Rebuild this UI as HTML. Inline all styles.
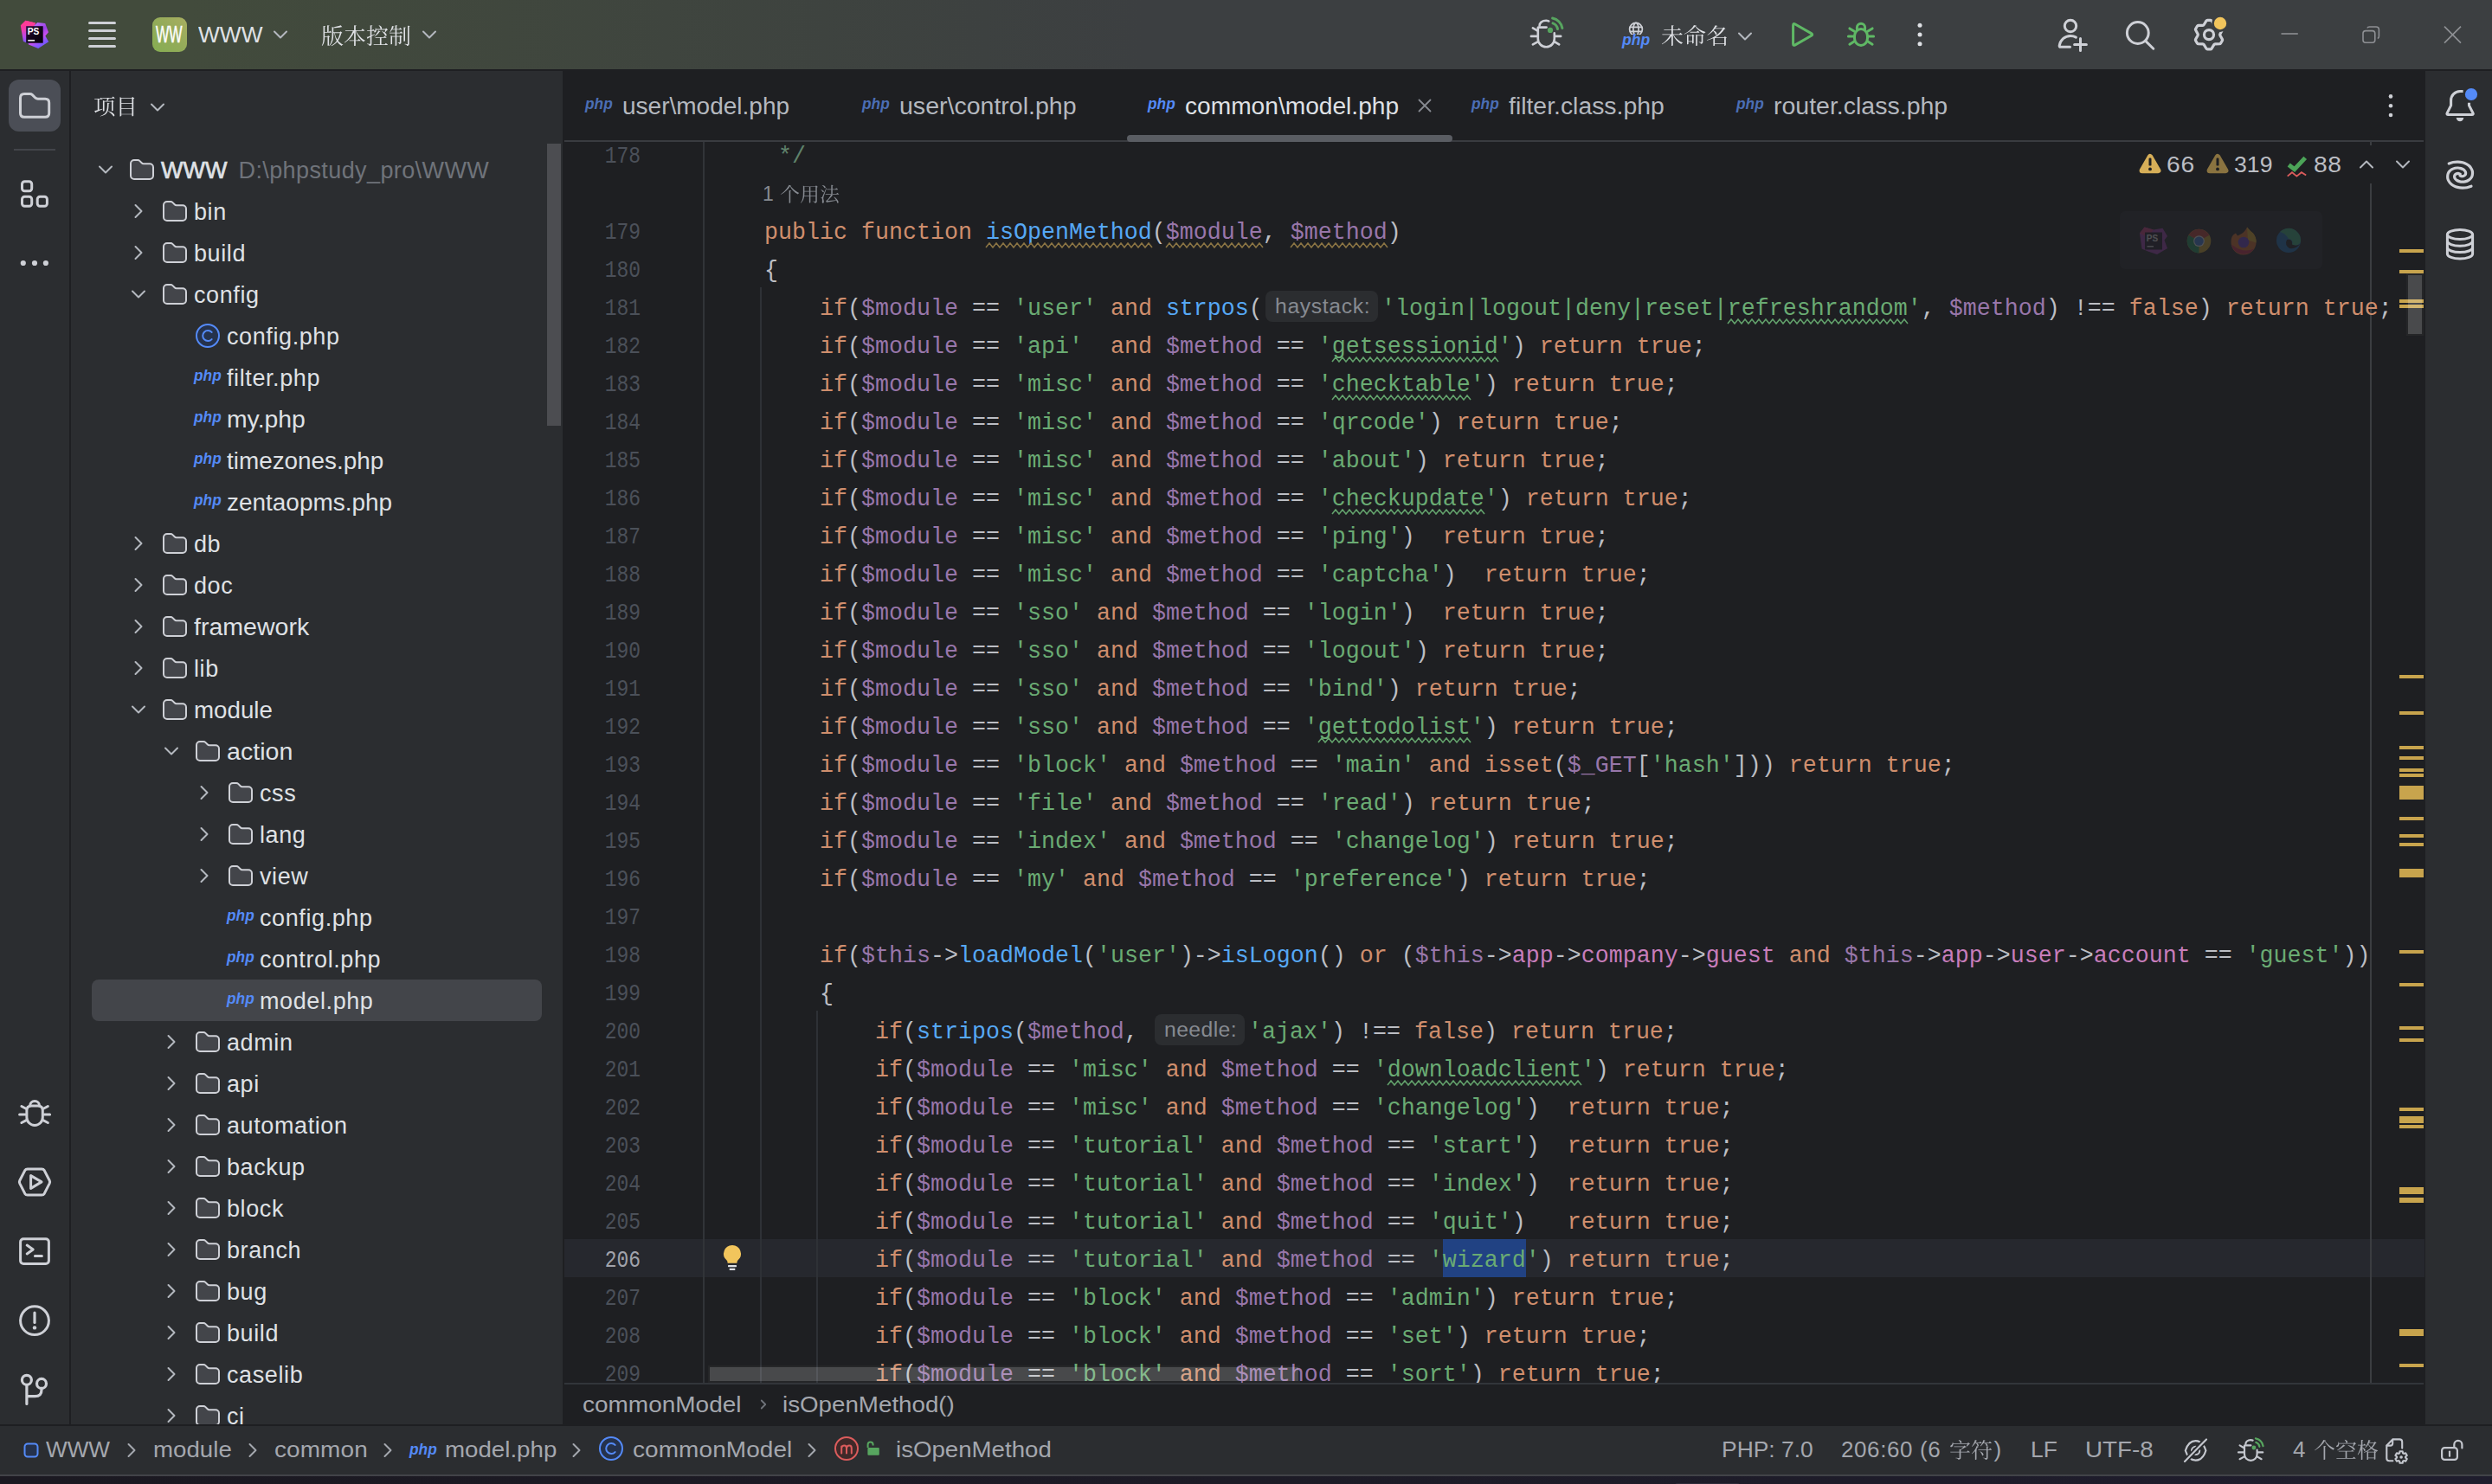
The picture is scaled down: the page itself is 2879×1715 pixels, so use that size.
<!DOCTYPE html><html lang='en'><head><meta charset='utf-8'><title>PhpStorm</title><style>
*{box-sizing:border-box;margin:0;padding:0}
html,body{width:2879px;height:1715px;overflow:hidden;background:#1E1F22}
body{position:relative;font-family:"Liberation Sans",sans-serif;color:#DFE1E5;font-size:27px;-webkit-font-smoothing:antialiased}
.abs{position:absolute}
.t{position:absolute;white-space:pre;line-height:1}
svg{position:absolute;overflow:visible}
#title{left:0;top:0;width:2879px;height:80px;background:linear-gradient(90deg,#424B3C 0px,#424B3C 220px,#3C3F41 1320px,#3C3F41 100%)}
#lstrip{left:0;top:82px;width:80px;height:1564px;background:#2B2D30}
#proj{left:82px;top:82px;width:568px;height:1564px;background:#2B2D30}
#rstrip{left:2802px;top:82px;width:77px;height:1564px;background:#2B2D30}
#status{left:0;top:1648px;width:2879px;height:56px;background:#2B2D30}
#task{left:0;top:1706px;width:2879px;height:9px;background:linear-gradient(90deg,#1B1921 0%,#1D1B26 50%,#1F1D2D 100%)}
.code{position:absolute;left:819px;white-space:pre;font-family:"Liberation Mono",monospace;font-size:26.667px;line-height:44px;height:44px;color:#BCBEC4;letter-spacing:-0.002px;transform:scaleY(1.07);transform-origin:0 29.1px}
.num{position:absolute;left:640px;width:100px;text-align:right;white-space:pre;font-family:"Liberation Mono",monospace;font-size:28px;line-height:44px;height:44px;color:#4B5059;transform:scaleX(0.82);transform-origin:100% 0}
.k{color:#CF8E6D}.v{color:#9876AA}.s{color:#6AAB73}.f{color:#56A8F5}.p{color:#C77DBB}.c{color:#5F826B}
.tree{position:absolute;white-space:pre;font-size:27px;line-height:48px;height:48px;color:#DFE1E5;letter-spacing:0.4px}
</style></head><body>
<div id='title' class='abs'></div>
<div class='abs' style='left:0;top:80px;width:2879px;height:2px;background:#1E1F22'></div>
<div id='lstrip' class='abs'></div>
<div id='proj' class='abs'></div>
<div id='rstrip' class='abs'></div>
<div id='status' class='abs'></div>
<div id='task' class='abs'></div>
<div class='abs' style='left:1935px;top:1714px;width:75px;height:6px;border-radius:5px;background:#2E2C3A'></div>
<div class='abs' id='ed' style='left:0;top:164px;width:2801px;height:1434px;overflow:hidden'><div class='abs' style='left:0;top:-164px;width:2879px;height:1715px'>
<div class='abs' style='left:652px;top:1432px;width:2149px;height:44px;background:#26282E'></div>
<div class='abs' style='left:812px;top:164px;width:2px;height:1434px;background:#313438'></div>
<div class='abs' style='left:2738px;top:164px;width:2px;height:1434px;background:#3B3D41'></div>
<div class='abs' style='left:878.25px;top:332px;width:2px;height:1266px;background:#2E3136'></div>
<div class='abs' style='left:942.75px;top:1168px;width:2px;height:430px;background:#2E3136'></div>
<div class='num' style='top:158.5px'>178</div>
<div class='code' style='top:159px'><span class='c'>     */</span></div>
<div class='num' style='top:246.5px'>179</div>
<div class='code' style='top:247px'>    <span class='k'>public</span> <span class='k'>function</span> <span class='f'><span class='ww'>isOpenMethod</span></span>(<span class='v'><span class='ww'>$module</span></span>, <span class='v'><span class='ww'>$method</span></span>)</div>
<div class='num' style='top:290.5px'>180</div>
<div class='code' style='top:291px'>    {</div>
<div class='num' style='top:334.5px'>181</div>
<div class='code' style='top:335px'>        <span class='k'>if</span>(<span class='v'>$module</span> == <span class='s'>'user'</span> <span class='k'>and</span> <span class='f'>strpos</span>(</div>
<div class='abs' style='left:1462px;top:336px;width:130px;height:36px;border-radius:8px;background:#2B2D30'></div>
<div class='t' style='left:1472.5px;top:342.73px;font-size:23px;color:#868A91;letter-spacing:0.601px;transform:scaleX(1.0750);transform-origin:0 0'>haystack:</div>
<div class='code' style='top:335px;left:1596px'><span class='s'>'login|logout|deny|reset|<span class='wt'>refreshrandom</span>'</span>, <span class='v'>$method</span>) !== <span class='k'>false</span>) <span class='k'>return</span> <span class='k'>true</span>;</div>
<div class='num' style='top:378.5px'>182</div>
<div class='code' style='top:379px'>        <span class='k'>if</span>(<span class='v'>$module</span> == <span class='s'>'api'</span>  <span class='k'>and</span> <span class='v'>$method</span> == <span class='s'>'<span class='wt'>getsessionid</span>'</span>) <span class='k'>return</span> <span class='k'>true</span>;</div>
<div class='num' style='top:422.5px'>183</div>
<div class='code' style='top:423px'>        <span class='k'>if</span>(<span class='v'>$module</span> == <span class='s'>'misc'</span> <span class='k'>and</span> <span class='v'>$method</span> == <span class='s'>'<span class='wt'>checktable</span>'</span>) <span class='k'>return</span> <span class='k'>true</span>;</div>
<div class='num' style='top:466.5px'>184</div>
<div class='code' style='top:467px'>        <span class='k'>if</span>(<span class='v'>$module</span> == <span class='s'>'misc'</span> <span class='k'>and</span> <span class='v'>$method</span> == <span class='s'>'qrcode'</span>) <span class='k'>return</span> <span class='k'>true</span>;</div>
<div class='num' style='top:510.5px'>185</div>
<div class='code' style='top:511px'>        <span class='k'>if</span>(<span class='v'>$module</span> == <span class='s'>'misc'</span> <span class='k'>and</span> <span class='v'>$method</span> == <span class='s'>'about'</span>) <span class='k'>return</span> <span class='k'>true</span>;</div>
<div class='num' style='top:554.5px'>186</div>
<div class='code' style='top:555px'>        <span class='k'>if</span>(<span class='v'>$module</span> == <span class='s'>'misc'</span> <span class='k'>and</span> <span class='v'>$method</span> == <span class='s'>'<span class='wt'>checkupdate</span>'</span>) <span class='k'>return</span> <span class='k'>true</span>;</div>
<div class='num' style='top:598.5px'>187</div>
<div class='code' style='top:599px'>        <span class='k'>if</span>(<span class='v'>$module</span> == <span class='s'>'misc'</span> <span class='k'>and</span> <span class='v'>$method</span> == <span class='s'>'ping'</span>)  <span class='k'>return</span> <span class='k'>true</span>;</div>
<div class='num' style='top:642.5px'>188</div>
<div class='code' style='top:643px'>        <span class='k'>if</span>(<span class='v'>$module</span> == <span class='s'>'misc'</span> <span class='k'>and</span> <span class='v'>$method</span> == <span class='s'>'captcha'</span>)  <span class='k'>return</span> <span class='k'>true</span>;</div>
<div class='num' style='top:686.5px'>189</div>
<div class='code' style='top:687px'>        <span class='k'>if</span>(<span class='v'>$module</span> == <span class='s'>'sso'</span> <span class='k'>and</span> <span class='v'>$method</span> == <span class='s'>'login'</span>)  <span class='k'>return</span> <span class='k'>true</span>;</div>
<div class='num' style='top:730.5px'>190</div>
<div class='code' style='top:731px'>        <span class='k'>if</span>(<span class='v'>$module</span> == <span class='s'>'sso'</span> <span class='k'>and</span> <span class='v'>$method</span> == <span class='s'>'logout'</span>) <span class='k'>return</span> <span class='k'>true</span>;</div>
<div class='num' style='top:774.5px'>191</div>
<div class='code' style='top:775px'>        <span class='k'>if</span>(<span class='v'>$module</span> == <span class='s'>'sso'</span> <span class='k'>and</span> <span class='v'>$method</span> == <span class='s'>'bind'</span>) <span class='k'>return</span> <span class='k'>true</span>;</div>
<div class='num' style='top:818.5px'>192</div>
<div class='code' style='top:819px'>        <span class='k'>if</span>(<span class='v'>$module</span> == <span class='s'>'sso'</span> <span class='k'>and</span> <span class='v'>$method</span> == <span class='s'>'<span class='wt'>gettodolist</span>'</span>) <span class='k'>return</span> <span class='k'>true</span>;</div>
<div class='num' style='top:862.5px'>193</div>
<div class='code' style='top:863px'>        <span class='k'>if</span>(<span class='v'>$module</span> == <span class='s'>'block'</span> <span class='k'>and</span> <span class='v'>$method</span> == <span class='s'>'main'</span> <span class='k'>and</span> <span class='k'>isset</span>(<span class='v'>$_GET</span>[<span class='s'>'hash'</span>])) <span class='k'>return</span> <span class='k'>true</span>;</div>
<div class='num' style='top:906.5px'>194</div>
<div class='code' style='top:907px'>        <span class='k'>if</span>(<span class='v'>$module</span> == <span class='s'>'file'</span> <span class='k'>and</span> <span class='v'>$method</span> == <span class='s'>'read'</span>) <span class='k'>return</span> <span class='k'>true</span>;</div>
<div class='num' style='top:950.5px'>195</div>
<div class='code' style='top:951px'>        <span class='k'>if</span>(<span class='v'>$module</span> == <span class='s'>'index'</span> <span class='k'>and</span> <span class='v'>$method</span> == <span class='s'>'changelog'</span>) <span class='k'>return</span> <span class='k'>true</span>;</div>
<div class='num' style='top:994.5px'>196</div>
<div class='code' style='top:995px'>        <span class='k'>if</span>(<span class='v'>$module</span> == <span class='s'>'my'</span> <span class='k'>and</span> <span class='v'>$method</span> == <span class='s'>'preference'</span>) <span class='k'>return</span> <span class='k'>true</span>;</div>
<div class='num' style='top:1038.5px'>197</div>
<div class='code' style='top:1039px'></div>
<div class='num' style='top:1082.5px'>198</div>
<div class='code' style='top:1083px'>        <span class='k'>if</span>(<span class='v'>$this</span>-&gt;<span class='f'>loadModel</span>(<span class='s'>'user'</span>)-&gt;<span class='f'>isLogon</span>() <span class='k'>or</span> (<span class='v'>$this</span>-&gt;<span class='p'>app</span>-&gt;<span class='p'>company</span>-&gt;<span class='p'>guest</span> <span class='k'>and</span> <span class='v'>$this</span>-&gt;<span class='p'>app</span>-&gt;<span class='p'>user</span>-&gt;<span class='p'>account</span> == <span class='s'>'guest'</span>))</div>
<div class='num' style='top:1126.5px'>199</div>
<div class='code' style='top:1127px'>        {</div>
<div class='num' style='top:1170.5px'>200</div>
<div class='code' style='top:1171px'>            <span class='k'>if</span>(<span class='f'>stripos</span>(<span class='v'>$method</span>, </div>
<div class='abs' style='left:1334px;top:1172px;width:104px;height:36px;border-radius:8px;background:#2B2D30'></div>
<div class='t' style='left:1344.5px;top:1178.73px;font-size:23px;color:#868A91;letter-spacing:0.385px;transform:scaleX(1.0750);transform-origin:0 0'>needle:</div>
<div class='code' style='top:1171px;left:1442px'><span class='s'>'ajax'</span>) !== <span class='k'>false</span>) <span class='k'>return</span> <span class='k'>true</span>;</div>
<div class='num' style='top:1214.5px'>201</div>
<div class='code' style='top:1215px'>            <span class='k'>if</span>(<span class='v'>$module</span> == <span class='s'>'misc'</span> <span class='k'>and</span> <span class='v'>$method</span> == <span class='s'>'<span class='wt'>downloadclient</span>'</span>) <span class='k'>return</span> <span class='k'>true</span>;</div>
<div class='num' style='top:1258.5px'>202</div>
<div class='code' style='top:1259px'>            <span class='k'>if</span>(<span class='v'>$module</span> == <span class='s'>'misc'</span> <span class='k'>and</span> <span class='v'>$method</span> == <span class='s'>'changelog'</span>)  <span class='k'>return</span> <span class='k'>true</span>;</div>
<div class='num' style='top:1302.5px'>203</div>
<div class='code' style='top:1303px'>            <span class='k'>if</span>(<span class='v'>$module</span> == <span class='s'>'tutorial'</span> <span class='k'>and</span> <span class='v'>$method</span> == <span class='s'>'start'</span>)  <span class='k'>return</span> <span class='k'>true</span>;</div>
<div class='num' style='top:1346.5px'>204</div>
<div class='code' style='top:1347px'>            <span class='k'>if</span>(<span class='v'>$module</span> == <span class='s'>'tutorial'</span> <span class='k'>and</span> <span class='v'>$method</span> == <span class='s'>'index'</span>)  <span class='k'>return</span> <span class='k'>true</span>;</div>
<div class='num' style='top:1390.5px'>205</div>
<div class='code' style='top:1391px'>            <span class='k'>if</span>(<span class='v'>$module</span> == <span class='s'>'tutorial'</span> <span class='k'>and</span> <span class='v'>$method</span> == <span class='s'>'quit'</span>)   <span class='k'>return</span> <span class='k'>true</span>;</div>
<div class='num' style='top:1434.5px;color:#A1A3AB'>206</div>
<div class='abs' style='left:1667px;top:1432px;width:96px;height:44px;background:#214283'></div>
<div class='code' style='top:1435px'>            <span class='k'>if</span>(<span class='v'>$module</span> == <span class='s'>'tutorial'</span> <span class='k'>and</span> <span class='v'>$method</span> == <span class='s'>'wizard'</span>) <span class='k'>return</span> <span class='k'>true</span>;</div>
<div class='num' style='top:1478.5px'>207</div>
<div class='code' style='top:1479px'>            <span class='k'>if</span>(<span class='v'>$module</span> == <span class='s'>'block'</span> <span class='k'>and</span> <span class='v'>$method</span> == <span class='s'>'admin'</span>) <span class='k'>return</span> <span class='k'>true</span>;</div>
<div class='num' style='top:1522.5px'>208</div>
<div class='code' style='top:1523px'>            <span class='k'>if</span>(<span class='v'>$module</span> == <span class='s'>'block'</span> <span class='k'>and</span> <span class='v'>$method</span> == <span class='s'>'set'</span>) <span class='k'>return</span> <span class='k'>true</span>;</div>
<div class='num' style='top:1566.5px'>209</div>
<div class='code' style='top:1567px'>            <span class='k'>if</span>(<span class='v'>$module</span> == <span class='s'>'block'</span> <span class='k'>and</span> <span class='v'>$method</span> == <span class='s'>'sort'</span>) <span class='k'>return</span> <span class='k'>true</span>;</div>
<div class='abs' style='left:2772px;top:288px;width:28px;height:4px;background:#C8A44D'></div>
<div class='abs' style='left:2772px;top:312px;width:28px;height:4px;background:#C8A44D'></div>
<div class='abs' style='left:2772px;top:346px;width:28px;height:4px;background:#C8A44D'></div>
<div class='abs' style='left:2772px;top:352px;width:28px;height:4px;background:#C8A44D'></div>
<div class='abs' style='left:2772px;top:780px;width:28px;height:4px;background:#C8A44D'></div>
<div class='abs' style='left:2772px;top:822px;width:28px;height:4px;background:#C8A44D'></div>
<div class='abs' style='left:2772px;top:862px;width:28px;height:4px;background:#C8A44D'></div>
<div class='abs' style='left:2772px;top:874px;width:28px;height:4px;background:#C8A44D'></div>
<div class='abs' style='left:2772px;top:888px;width:28px;height:4px;background:#C8A44D'></div>
<div class='abs' style='left:2772px;top:894px;width:28px;height:4px;background:#C8A44D'></div>
<div class='abs' style='left:2772px;top:908px;width:28px;height:16px;background:#C8A44D'></div>
<div class='abs' style='left:2772px;top:944px;width:28px;height:4px;background:#C8A44D'></div>
<div class='abs' style='left:2772px;top:964px;width:28px;height:4px;background:#C8A44D'></div>
<div class='abs' style='left:2772px;top:974px;width:28px;height:4px;background:#C8A44D'></div>
<div class='abs' style='left:2772px;top:1004px;width:28px;height:10px;background:#C8A44D'></div>
<div class='abs' style='left:2772px;top:1098px;width:28px;height:4px;background:#C8A44D'></div>
<div class='abs' style='left:2772px;top:1136px;width:28px;height:4px;background:#C8A44D'></div>
<div class='abs' style='left:2772px;top:1186px;width:28px;height:4px;background:#C8A44D'></div>
<div class='abs' style='left:2772px;top:1200px;width:28px;height:4px;background:#C8A44D'></div>
<div class='abs' style='left:2772px;top:1280px;width:28px;height:4px;background:#C8A44D'></div>
<div class='abs' style='left:2772px;top:1290px;width:28px;height:8px;background:#C8A44D'></div>
<div class='abs' style='left:2772px;top:1300px;width:28px;height:4px;background:#C8A44D'></div>
<div class='abs' style='left:2772px;top:1372px;width:28px;height:8px;background:#C8A44D'></div>
<div class='abs' style='left:2772px;top:1384px;width:28px;height:6px;background:#C8A44D'></div>
<div class='abs' style='left:2772px;top:1536px;width:28px;height:8px;background:#C8A44D'></div>
<div class='abs' style='left:2772px;top:1576px;width:28px;height:4px;background:#C8A44D'></div>
<div class='abs' style='left:2780px;top:316px;width:20px;height:72px;background:rgba(255,255,255,0.03)'></div>
<div class='abs' style='left:2782px;top:318px;width:16px;height:68px;background:rgba(255,255,255,0.17)'></div>
<div class='abs' style='left:818px;top:1578px;width:684px;height:20px;background:rgba(255,255,255,0.03)'></div>
<div class='abs' style='left:820px;top:1580px;width:680px;height:16px;background:rgba(255,255,255,0.165)'></div>
<div class='t' style='left:881px;top:213.13px;font-size:23px;color:#868A91'>1</div>
<svg style='left:901px;top:209.80px' width='71' height='32' viewBox='0 -23 71 32'><path d='M11.68 -17.87C13.5 -14.12 16.77 -10.79 20.79 -8.46C21 -9.06 21.44 -9.61 22.13 -9.8L22.17 -10.12C17.92 -11.96 14.31 -14.93 12.1 -18.15C12.7 -18.19 12.95 -18.33 13.02 -18.61L10.4 -19.25C8.9 -15.62 4.88 -11.06 0.78 -8.35L0.97 -8C5.59 -10.35 9.64 -14.42 11.68 -17.87ZM13.04 -12.63 10.63 -12.88V1.84H10.92C11.52 1.84 12.19 1.52 12.19 1.31V-12.01C12.79 -12.07 12.97 -12.3 13.04 -12.63ZM28.38 -11.57H33.86V-6.74H28.2C28.36 -8.07 28.38 -9.38 28.38 -10.63ZM28.38 -12.24V-16.95H33.86V-12.24ZM26.86 -17.62V-10.6C26.86 -6.21 26.54 -1.89 23.87 1.54L24.22 1.77C26.68 -0.39 27.71 -3.2 28.11 -6.05H33.86V1.59H34.09C34.84 1.59 35.35 1.22 35.35 1.1V-6.05H41.28V-0.67C41.28 -0.3 41.15 -0.14 40.69 -0.14C40.2 -0.14 37.74 -0.34 37.74 -0.34V0.02C38.82 0.18 39.42 0.37 39.79 0.6C40.11 0.85 40.25 1.26 40.3 1.72C42.53 1.49 42.78 0.71 42.78 -0.48V-16.58C43.29 -16.7 43.7 -16.91 43.86 -17.11L41.84 -18.65L41.03 -17.62H28.66L26.86 -18.4ZM41.28 -11.57V-6.74H35.35V-11.57ZM41.28 -12.24H35.35V-16.95H41.28ZM48.32 -4.69C48.07 -4.69 47.31 -4.69 47.31 -4.69V-4.19C47.79 -4.14 48.14 -4.07 48.44 -3.86C48.97 -3.52 49.1 -1.7 48.78 0.64C48.83 1.38 49.1 1.79 49.52 1.79C50.32 1.79 50.78 1.17 50.83 0.18C50.92 -1.72 50.23 -2.71 50.23 -3.77C50.21 -4.35 50.37 -5.08 50.6 -5.84C50.95 -7.01 52.99 -12.77 54.05 -15.85L53.64 -15.96C49.31 -6.03 49.31 -6.03 48.9 -5.17C48.69 -4.69 48.6 -4.69 48.32 -4.69ZM47.2 -13.87 46.99 -13.66C47.95 -13.06 49.15 -11.89 49.5 -10.92C51.17 -9.98 52.05 -13.32 47.2 -13.87ZM48.94 -18.98 48.74 -18.75C49.77 -18.08 51.08 -16.81 51.5 -15.71C53.2 -14.79 54.12 -18.22 48.94 -18.98ZM65.14 -15.82 64.03 -14.44H60.79V-18.35C61.36 -18.45 61.57 -18.65 61.64 -18.98L59.29 -19.23V-14.44H54.14L54.33 -13.78H59.29V-8.97H52.62L52.81 -8.28H59.16C58.21 -6.26 55.68 -2.67 53.8 -1.13C53.64 -0.99 53.18 -0.9 53.18 -0.9L54 1.22C54.19 1.15 54.35 1.01 54.51 0.76C58.83 0.09 62.58 -0.64 65.18 -1.2C65.69 -0.28 66.1 0.64 66.29 1.45C68.1 2.88 69.21 -1.31 62.65 -5.52L62.35 -5.34C63.16 -4.32 64.12 -3.01 64.91 -1.68C60.93 -1.29 57.09 -0.97 54.74 -0.83C56.88 -2.55 59.27 -5.08 60.58 -6.88C61.04 -6.79 61.34 -6.97 61.46 -7.2L59.32 -8.28H67.76C68.08 -8.28 68.31 -8.39 68.36 -8.65C67.6 -9.38 66.31 -10.35 66.31 -10.35L65.23 -8.97H60.79V-13.78H66.54C66.84 -13.78 67.07 -13.89 67.14 -14.14C66.38 -14.86 65.14 -15.82 65.14 -15.82Z' fill='#868A91'/></svg>
<svg style='left:1139px;top:276px' width='192' height='12' viewBox='0 0 192 12' fill='none'><path d='M0.0 9.9 L4.0 5.1 L8.0 9.9 L12.0 5.1 L16.0 9.9 L20.0 5.1 L24.0 9.9 L28.0 5.1 L32.0 9.9 L36.0 5.1 L40.0 9.9 L44.0 5.1 L48.0 9.9 L52.0 5.1 L56.0 9.9 L60.0 5.1 L64.0 9.9 L68.0 5.1 L72.0 9.9 L76.0 5.1 L80.0 9.9 L84.0 5.1 L88.0 9.9 L92.0 5.1 L96.0 9.9 L100.0 5.1 L104.0 9.9 L108.0 5.1 L112.0 9.9 L116.0 5.1 L120.0 9.9 L124.0 5.1 L128.0 9.9 L132.0 5.1 L136.0 9.9 L140.0 5.1 L144.0 9.9 L148.0 5.1 L152.0 9.9 L156.0 5.1 L160.0 9.9 L164.0 5.1 L168.0 9.9 L172.0 5.1 L176.0 9.9 L180.0 5.1 L184.0 9.9 L188.0 5.1 L192.0 9.9' stroke='#8A7444' stroke-width='1.6' stroke-linejoin='miter'/></svg>
<svg style='left:1347px;top:276px' width='112' height='12' viewBox='0 0 112 12' fill='none'><path d='M0.0 9.9 L4.0 5.1 L8.0 9.9 L12.0 5.1 L16.0 9.9 L20.0 5.1 L24.0 9.9 L28.0 5.1 L32.0 9.9 L36.0 5.1 L40.0 9.9 L44.0 5.1 L48.0 9.9 L52.0 5.1 L56.0 9.9 L60.0 5.1 L64.0 9.9 L68.0 5.1 L72.0 9.9 L76.0 5.1 L80.0 9.9 L84.0 5.1 L88.0 9.9 L92.0 5.1 L96.0 9.9 L100.0 5.1 L104.0 9.9 L108.0 5.1 L112.0 9.9' stroke='#8A7444' stroke-width='1.6' stroke-linejoin='miter'/></svg>
<svg style='left:1491px;top:276px' width='112' height='12' viewBox='0 0 112 12' fill='none'><path d='M0.0 9.9 L4.0 5.1 L8.0 9.9 L12.0 5.1 L16.0 9.9 L20.0 5.1 L24.0 9.9 L28.0 5.1 L32.0 9.9 L36.0 5.1 L40.0 9.9 L44.0 5.1 L48.0 9.9 L52.0 5.1 L56.0 9.9 L60.0 5.1 L64.0 9.9 L68.0 5.1 L72.0 9.9 L76.0 5.1 L80.0 9.9 L84.0 5.1 L88.0 9.9 L92.0 5.1 L96.0 9.9 L100.0 5.1 L104.0 9.9 L108.0 5.1 L112.0 9.9' stroke='#8A7444' stroke-width='1.6' stroke-linejoin='miter'/></svg>
<svg style='left:1996px;top:364px' width='208' height='12' viewBox='0 0 208 12' fill='none'><path d='M0.0 9.9 L4.0 5.1 L8.0 9.9 L12.0 5.1 L16.0 9.9 L20.0 5.1 L24.0 9.9 L28.0 5.1 L32.0 9.9 L36.0 5.1 L40.0 9.9 L44.0 5.1 L48.0 9.9 L52.0 5.1 L56.0 9.9 L60.0 5.1 L64.0 9.9 L68.0 5.1 L72.0 9.9 L76.0 5.1 L80.0 9.9 L84.0 5.1 L88.0 9.9 L92.0 5.1 L96.0 9.9 L100.0 5.1 L104.0 9.9 L108.0 5.1 L112.0 9.9 L116.0 5.1 L120.0 9.9 L124.0 5.1 L128.0 9.9 L132.0 5.1 L136.0 9.9 L140.0 5.1 L144.0 9.9 L148.0 5.1 L152.0 9.9 L156.0 5.1 L160.0 9.9 L164.0 5.1 L168.0 9.9 L172.0 5.1 L176.0 9.9 L180.0 5.1 L184.0 9.9 L188.0 5.1 L192.0 9.9 L196.0 5.1 L200.0 9.9 L204.0 5.1 L208.0 9.9' stroke='#62A06B' stroke-width='1.6' stroke-linejoin='miter'/></svg>
<svg style='left:1539px;top:408px' width='192' height='12' viewBox='0 0 192 12' fill='none'><path d='M0.0 9.9 L4.0 5.1 L8.0 9.9 L12.0 5.1 L16.0 9.9 L20.0 5.1 L24.0 9.9 L28.0 5.1 L32.0 9.9 L36.0 5.1 L40.0 9.9 L44.0 5.1 L48.0 9.9 L52.0 5.1 L56.0 9.9 L60.0 5.1 L64.0 9.9 L68.0 5.1 L72.0 9.9 L76.0 5.1 L80.0 9.9 L84.0 5.1 L88.0 9.9 L92.0 5.1 L96.0 9.9 L100.0 5.1 L104.0 9.9 L108.0 5.1 L112.0 9.9 L116.0 5.1 L120.0 9.9 L124.0 5.1 L128.0 9.9 L132.0 5.1 L136.0 9.9 L140.0 5.1 L144.0 9.9 L148.0 5.1 L152.0 9.9 L156.0 5.1 L160.0 9.9 L164.0 5.1 L168.0 9.9 L172.0 5.1 L176.0 9.9 L180.0 5.1 L184.0 9.9 L188.0 5.1 L192.0 9.9' stroke='#62A06B' stroke-width='1.6' stroke-linejoin='miter'/></svg>
<svg style='left:1539px;top:452px' width='160' height='12' viewBox='0 0 160 12' fill='none'><path d='M0.0 9.9 L4.0 5.1 L8.0 9.9 L12.0 5.1 L16.0 9.9 L20.0 5.1 L24.0 9.9 L28.0 5.1 L32.0 9.9 L36.0 5.1 L40.0 9.9 L44.0 5.1 L48.0 9.9 L52.0 5.1 L56.0 9.9 L60.0 5.1 L64.0 9.9 L68.0 5.1 L72.0 9.9 L76.0 5.1 L80.0 9.9 L84.0 5.1 L88.0 9.9 L92.0 5.1 L96.0 9.9 L100.0 5.1 L104.0 9.9 L108.0 5.1 L112.0 9.9 L116.0 5.1 L120.0 9.9 L124.0 5.1 L128.0 9.9 L132.0 5.1 L136.0 9.9 L140.0 5.1 L144.0 9.9 L148.0 5.1 L152.0 9.9 L156.0 5.1 L160.0 9.9' stroke='#62A06B' stroke-width='1.6' stroke-linejoin='miter'/></svg>
<svg style='left:1539px;top:584px' width='176' height='12' viewBox='0 0 176 12' fill='none'><path d='M0.0 9.9 L4.0 5.1 L8.0 9.9 L12.0 5.1 L16.0 9.9 L20.0 5.1 L24.0 9.9 L28.0 5.1 L32.0 9.9 L36.0 5.1 L40.0 9.9 L44.0 5.1 L48.0 9.9 L52.0 5.1 L56.0 9.9 L60.0 5.1 L64.0 9.9 L68.0 5.1 L72.0 9.9 L76.0 5.1 L80.0 9.9 L84.0 5.1 L88.0 9.9 L92.0 5.1 L96.0 9.9 L100.0 5.1 L104.0 9.9 L108.0 5.1 L112.0 9.9 L116.0 5.1 L120.0 9.9 L124.0 5.1 L128.0 9.9 L132.0 5.1 L136.0 9.9 L140.0 5.1 L144.0 9.9 L148.0 5.1 L152.0 9.9 L156.0 5.1 L160.0 9.9 L164.0 5.1 L168.0 9.9 L172.0 5.1 L176.0 9.9' stroke='#62A06B' stroke-width='1.6' stroke-linejoin='miter'/></svg>
<svg style='left:1523px;top:848px' width='176' height='12' viewBox='0 0 176 12' fill='none'><path d='M0.0 9.9 L4.0 5.1 L8.0 9.9 L12.0 5.1 L16.0 9.9 L20.0 5.1 L24.0 9.9 L28.0 5.1 L32.0 9.9 L36.0 5.1 L40.0 9.9 L44.0 5.1 L48.0 9.9 L52.0 5.1 L56.0 9.9 L60.0 5.1 L64.0 9.9 L68.0 5.1 L72.0 9.9 L76.0 5.1 L80.0 9.9 L84.0 5.1 L88.0 9.9 L92.0 5.1 L96.0 9.9 L100.0 5.1 L104.0 9.9 L108.0 5.1 L112.0 9.9 L116.0 5.1 L120.0 9.9 L124.0 5.1 L128.0 9.9 L132.0 5.1 L136.0 9.9 L140.0 5.1 L144.0 9.9 L148.0 5.1 L152.0 9.9 L156.0 5.1 L160.0 9.9 L164.0 5.1 L168.0 9.9 L172.0 5.1 L176.0 9.9' stroke='#62A06B' stroke-width='1.6' stroke-linejoin='miter'/></svg>
<svg style='left:1603px;top:1244px' width='224' height='12' viewBox='0 0 224 12' fill='none'><path d='M0.0 9.9 L4.0 5.1 L8.0 9.9 L12.0 5.1 L16.0 9.9 L20.0 5.1 L24.0 9.9 L28.0 5.1 L32.0 9.9 L36.0 5.1 L40.0 9.9 L44.0 5.1 L48.0 9.9 L52.0 5.1 L56.0 9.9 L60.0 5.1 L64.0 9.9 L68.0 5.1 L72.0 9.9 L76.0 5.1 L80.0 9.9 L84.0 5.1 L88.0 9.9 L92.0 5.1 L96.0 9.9 L100.0 5.1 L104.0 9.9 L108.0 5.1 L112.0 9.9 L116.0 5.1 L120.0 9.9 L124.0 5.1 L128.0 9.9 L132.0 5.1 L136.0 9.9 L140.0 5.1 L144.0 9.9 L148.0 5.1 L152.0 9.9 L156.0 5.1 L160.0 9.9 L164.0 5.1 L168.0 9.9 L172.0 5.1 L176.0 9.9 L180.0 5.1 L184.0 9.9 L188.0 5.1 L192.0 9.9 L196.0 5.1 L200.0 9.9 L204.0 5.1 L208.0 9.9 L212.0 5.1 L216.0 9.9 L220.0 5.1 L224.0 9.9' stroke='#62A06B' stroke-width='1.6' stroke-linejoin='miter'/></svg>
<svg style='left:830px;top:1432px' width='32' height='44' viewBox='0 0 32 44' fill='none'><path d='M16 7 A10 10 0 0 1 22.4 24.6 Q21.4 25.6 21.4 27.8 H10.6 Q10.6 25.6 9.6 24.6 A10 10 0 0 1 16 7 Z' fill='#F2C55C'/><rect x='11' y='30' width='10' height='2.2' rx='0.6' fill='#DFE1E5'/><rect x='12.6' y='33.8' width='6.8' height='2.2' rx='0.8' fill='#DFE1E5'/></svg>
<svg style='left:2440px;top:240px' width='260' height='80' viewBox='2440 240 260 80' fill='none'><rect x='2449' y='244' width='234' height='67' rx='6' fill='#212226'/><g opacity='0.2'><g transform='translate(2472,262)'><path d='M5.5 0.5 L16 3.5 L26.5 1.8 L32 11 L28.5 15.5 L32 25 L20 32 L9.5 28.5 L2.5 25.5 L0 7.5 Z' fill='#B440C8'/><path d='M5.5 0.5 L16 3.5 L9 12 L0 7.5Z' fill='#E83C8C'/><rect x='6' y='6.5' width='20' height='20' fill='#201428'/><rect x='8.5' y='22' width='7.5' height='1.6' fill='#DDD'/><text x='7.8' y='17' font-family='Liberation Sans' font-weight='700' font-size='10' fill='#FFFFFF'>PS</text></g><circle cx='2540.5' cy='278.6' r='13.8' fill='#E8B92E'/><path d='M2540.5 278.6 L2528.55 271.70000000000005 A13.8 13.8 0 0 1 2552.45 271.70000000000005 Z' fill='#DB4437'/><path d='M2540.5 278.6 L2528.55 271.70000000000005 A13.8 13.8 0 0 0 2540.5 292.40000000000003 Z' fill='#1DA462'/><circle cx='2540.5' cy='278.6' r='6.4' fill='#FFFFFF'/><circle cx='2540.5' cy='278.6' r='5.2' fill='#4285F4'/><path d='M2577.5 279.5 Q2577.5 271.5 2583 269.5 L2585 272.5 L2589 270.5 Q2594 267.5 2596 262.5 Q2600 267.5 2603 269.5 Q2607 274.5 2606.5 280.5 A14.5 14.5 0 0 1 2577.5 279.5 Z' fill='#F5792A'/><path d='M2596 262.5 Q2600 267.5 2603 269.5 Q2607 274.5 2606.5 280.5 L2597 277.5 Z' fill='#FFC02A'/><path d='M2578 282.5 A14.5 14.5 0 0 0 2604 287.5 Q2592 293.5 2578 282.5Z' fill='#E22850'/><circle cx='2592' cy='280.0' r='6.3' fill='#7542E5'/><circle cx='2644' cy='278' r='14' fill='#1B77C9'/><path d='M2634 268 A14 14 0 0 1 2658 279 Q2656 285 2648 283 Q2650 277 2644 276 Q2640 269 2634 268Z' fill='#3CC48C'/><path d='M2642 277 Q2649 276 2648 282.6 Q2653 285 2657 282 Q2653 288 2645 287 Q2639 283 2642 277Z' fill='#1E1F22'/></g></svg>
</div></div>
<div class='abs' style='left:82px;top:82px;width:568px;height:1564px;overflow:hidden'><div class='abs' style='left:-82px;top:-82px;width:2879px;height:1715px'>
<svg style='left:108px;top:107.00px' width='53' height='36' viewBox='0 -25.5 53 36'><path d='M18.54 -13.06 15.96 -13.72C15.89 -5.02 15.76 -1.2 7.65 1.63L7.93 2.12C17.29 -0.41 17.29 -4.59 17.59 -12.52C18.18 -12.52 18.44 -12.75 18.54 -13.06ZM17.24 -4.18 16.98 -3.93C19.1 -2.6 21.9 -0.15 22.95 1.76C25.14 2.8 25.73 -1.78 17.24 -4.18ZM22.49 -21.06 21.29 -19.58H10.1L10.3 -18.82H15.76C15.66 -17.8 15.53 -16.55 15.38 -15.68H12.7L10.94 -16.52V-3.98H11.22C11.91 -3.98 12.57 -4.39 12.57 -4.56V-14.94H20.99V-4.21H21.24C21.78 -4.21 22.59 -4.62 22.62 -4.77V-14.71C23.05 -14.82 23.43 -14.99 23.59 -15.17L21.65 -16.68L20.76 -15.68H16.17C16.7 -16.55 17.29 -17.75 17.75 -18.82H24C24.35 -18.82 24.63 -18.95 24.68 -19.23C23.84 -20.02 22.49 -21.06 22.49 -21.06ZM8.64 -19.79 7.6 -18.49H1.1L1.3 -17.72H4.79V-5.25C3.26 -4.92 1.99 -4.64 1.15 -4.51L2.19 -2.17C2.45 -2.24 2.68 -2.47 2.78 -2.78C6.09 -4.13 8.57 -5.33 10.38 -6.25L10.28 -6.63C9 -6.27 7.7 -5.94 6.48 -5.66V-17.72H9.89C10.25 -17.72 10.48 -17.85 10.56 -18.13C9.82 -18.84 8.64 -19.79 8.64 -19.79ZM44.45 -18.64V-13.31H32.23V-18.64ZM30.52 -19.38V1.96H30.86C31.62 1.96 32.23 1.53 32.23 1.27V-0.13H44.45V1.86H44.68C45.31 1.86 46.13 1.38 46.18 1.2V-18.23C46.74 -18.33 47.17 -18.56 47.38 -18.79L45.16 -20.55L44.17 -19.38H32.38L30.52 -20.25ZM32.23 -12.57H44.45V-7.14H32.23ZM32.23 -6.4H44.45V-0.87H32.23Z' fill='#DFE1E5'/></svg>
<svg style='left:172px;top:113.5px' width='20' height='20' viewBox='0 0 20 20' fill='none'><path d='M3 6.5 L10 13.5 L17 6.5' stroke='#B4B8BF' stroke-width='2' stroke-linecap='round' stroke-linejoin='round'/></svg>
<div class='abs' style='left:106px;top:1132px;width:520px;height:48px;border-radius:8px;background:#43454A'></div>
<svg style='left:148px;top:180px' width='32' height='32' viewBox='0 0 16 16' fill='none'><path d='M1.5 4.5C1.5 3.4 2.4 2.5 3.5 2.5H5.59C5.98 2.5 6.37 2.66 6.65 2.94L7.85 4.15C8.13 4.43 8.52 4.59 8.91 4.59H12.5C13.6 4.59 14.5 5.48 14.5 6.59V11.5C14.5 12.6 13.6 13.5 12.5 13.5H3.5C2.4 13.5 1.5 12.6 1.5 11.5V4.5Z' fill='#43454A' stroke='#CED0D6' stroke-width='1'/></svg>
<svg style='left:112px;top:186px' width='20' height='20' viewBox='0 0 20 20' fill='none'><path d='M3 6.5 L10 13.5 L17 6.5' stroke='#B4B8BF' stroke-width='2' stroke-linecap='round' stroke-linejoin='round'/></svg>
<div class='t' style='left:186px;top:184.14px;font-size:27px;color:#DFE1E5;transform:scaleX(0.9992);transform-origin:0 0;-webkit-text-stroke:0.7px #DFE1E5'>WWW</div>
<div class='t' style='left:275.5px;top:184.14px;font-size:27px;color:#6F737A;letter-spacing:0.400px'>D:\phpstudy_pro\WWW</div>
<svg style='left:186px;top:228px' width='32' height='32' viewBox='0 0 16 16' fill='none'><path d='M1.5 4.5C1.5 3.4 2.4 2.5 3.5 2.5H5.59C5.98 2.5 6.37 2.66 6.65 2.94L7.85 4.15C8.13 4.43 8.52 4.59 8.91 4.59H12.5C13.6 4.59 14.5 5.48 14.5 6.59V11.5C14.5 12.6 13.6 13.5 12.5 13.5H3.5C2.4 13.5 1.5 12.6 1.5 11.5V4.5Z' fill='#43454A' stroke='#CED0D6' stroke-width='1'/></svg>
<svg style='left:149.5px;top:234px' width='20' height='20' viewBox='0 0 20 20' fill='none'><path d='M6.5 3 L13.5 10 L6.5 17' stroke='#B4B8BF' stroke-width='2' stroke-linecap='round' stroke-linejoin='round'/></svg>
<div class='t' style='left:224px;top:232.14px;font-size:27px;color:#DFE1E5;letter-spacing:0.600px'>bin</div>
<svg style='left:186px;top:276px' width='32' height='32' viewBox='0 0 16 16' fill='none'><path d='M1.5 4.5C1.5 3.4 2.4 2.5 3.5 2.5H5.59C5.98 2.5 6.37 2.66 6.65 2.94L7.85 4.15C8.13 4.43 8.52 4.59 8.91 4.59H12.5C13.6 4.59 14.5 5.48 14.5 6.59V11.5C14.5 12.6 13.6 13.5 12.5 13.5H3.5C2.4 13.5 1.5 12.6 1.5 11.5V4.5Z' fill='#43454A' stroke='#CED0D6' stroke-width='1'/></svg>
<svg style='left:149.5px;top:282px' width='20' height='20' viewBox='0 0 20 20' fill='none'><path d='M6.5 3 L13.5 10 L6.5 17' stroke='#B4B8BF' stroke-width='2' stroke-linecap='round' stroke-linejoin='round'/></svg>
<div class='t' style='left:224px;top:280.14px;font-size:27px;color:#DFE1E5;letter-spacing:0.600px'>build</div>
<svg style='left:186px;top:324px' width='32' height='32' viewBox='0 0 16 16' fill='none'><path d='M1.5 4.5C1.5 3.4 2.4 2.5 3.5 2.5H5.59C5.98 2.5 6.37 2.66 6.65 2.94L7.85 4.15C8.13 4.43 8.52 4.59 8.91 4.59H12.5C13.6 4.59 14.5 5.48 14.5 6.59V11.5C14.5 12.6 13.6 13.5 12.5 13.5H3.5C2.4 13.5 1.5 12.6 1.5 11.5V4.5Z' fill='#43454A' stroke='#CED0D6' stroke-width='1'/></svg>
<svg style='left:150px;top:330px' width='20' height='20' viewBox='0 0 20 20' fill='none'><path d='M3 6.5 L10 13.5 L17 6.5' stroke='#B4B8BF' stroke-width='2' stroke-linecap='round' stroke-linejoin='round'/></svg>
<div class='t' style='left:224px;top:328.14px;font-size:27px;color:#DFE1E5;letter-spacing:0.600px'>config</div>
<svg style='left:224px;top:372px' width='32' height='32' viewBox='0 0 32 32' fill='none'><circle cx='16' cy='16' r='13' fill='#25324D' stroke='#548AF7' stroke-width='2'/><path d='M20.6 11.9A6 6 0 1 0 20.6 20.1' stroke='#548AF7' stroke-width='2' stroke-linecap='round'/></svg>
<div class='t' style='left:262px;top:376.14px;font-size:27px;color:#DFE1E5;letter-spacing:0.600px'>config.php</div>
<div class='t' style='left:224px;top:425.59px;font-size:17.5px;color:#548AF7;font-weight:700;font-style:italic;transform:scaleX(0.9890);transform-origin:0 0'>php</div>
<div class='t' style='left:262px;top:424.14px;font-size:27px;color:#DFE1E5;letter-spacing:0.600px'>filter.php</div>
<div class='t' style='left:224px;top:473.59px;font-size:17.5px;color:#548AF7;font-weight:700;font-style:italic;transform:scaleX(0.9890);transform-origin:0 0'>php</div>
<div class='t' style='left:262px;top:472.14px;font-size:27px;color:#DFE1E5;transform:scaleX(1.0502);transform-origin:0 0'>my.php</div>
<div class='t' style='left:224px;top:521.59px;font-size:17.5px;color:#548AF7;font-weight:700;font-style:italic;transform:scaleX(0.9890);transform-origin:0 0'>php</div>
<div class='t' style='left:262px;top:520.14px;font-size:27px;color:#DFE1E5;transform:scaleX(1.0323);transform-origin:0 0'>timezones.php</div>
<div class='t' style='left:224px;top:569.59px;font-size:17.5px;color:#548AF7;font-weight:700;font-style:italic;transform:scaleX(0.9890);transform-origin:0 0'>php</div>
<div class='t' style='left:262px;top:568.14px;font-size:27px;color:#DFE1E5;transform:scaleX(1.0350);transform-origin:0 0'>zentaopms.php</div>
<svg style='left:186px;top:612px' width='32' height='32' viewBox='0 0 16 16' fill='none'><path d='M1.5 4.5C1.5 3.4 2.4 2.5 3.5 2.5H5.59C5.98 2.5 6.37 2.66 6.65 2.94L7.85 4.15C8.13 4.43 8.52 4.59 8.91 4.59H12.5C13.6 4.59 14.5 5.48 14.5 6.59V11.5C14.5 12.6 13.6 13.5 12.5 13.5H3.5C2.4 13.5 1.5 12.6 1.5 11.5V4.5Z' fill='#43454A' stroke='#CED0D6' stroke-width='1'/></svg>
<svg style='left:149.5px;top:618px' width='20' height='20' viewBox='0 0 20 20' fill='none'><path d='M6.5 3 L13.5 10 L6.5 17' stroke='#B4B8BF' stroke-width='2' stroke-linecap='round' stroke-linejoin='round'/></svg>
<div class='t' style='left:224px;top:616.14px;font-size:27px;color:#DFE1E5;letter-spacing:0.600px'>db</div>
<svg style='left:186px;top:660px' width='32' height='32' viewBox='0 0 16 16' fill='none'><path d='M1.5 4.5C1.5 3.4 2.4 2.5 3.5 2.5H5.59C5.98 2.5 6.37 2.66 6.65 2.94L7.85 4.15C8.13 4.43 8.52 4.59 8.91 4.59H12.5C13.6 4.59 14.5 5.48 14.5 6.59V11.5C14.5 12.6 13.6 13.5 12.5 13.5H3.5C2.4 13.5 1.5 12.6 1.5 11.5V4.5Z' fill='#43454A' stroke='#CED0D6' stroke-width='1'/></svg>
<svg style='left:149.5px;top:666px' width='20' height='20' viewBox='0 0 20 20' fill='none'><path d='M6.5 3 L13.5 10 L6.5 17' stroke='#B4B8BF' stroke-width='2' stroke-linecap='round' stroke-linejoin='round'/></svg>
<div class='t' style='left:224px;top:664.14px;font-size:27px;color:#DFE1E5;letter-spacing:0.600px'>doc</div>
<svg style='left:186px;top:708px' width='32' height='32' viewBox='0 0 16 16' fill='none'><path d='M1.5 4.5C1.5 3.4 2.4 2.5 3.5 2.5H5.59C5.98 2.5 6.37 2.66 6.65 2.94L7.85 4.15C8.13 4.43 8.52 4.59 8.91 4.59H12.5C13.6 4.59 14.5 5.48 14.5 6.59V11.5C14.5 12.6 13.6 13.5 12.5 13.5H3.5C2.4 13.5 1.5 12.6 1.5 11.5V4.5Z' fill='#43454A' stroke='#CED0D6' stroke-width='1'/></svg>
<svg style='left:149.5px;top:714px' width='20' height='20' viewBox='0 0 20 20' fill='none'><path d='M6.5 3 L13.5 10 L6.5 17' stroke='#B4B8BF' stroke-width='2' stroke-linecap='round' stroke-linejoin='round'/></svg>
<div class='t' style='left:224px;top:712.14px;font-size:27px;color:#DFE1E5;transform:scaleX(1.0568);transform-origin:0 0'>framework</div>
<svg style='left:186px;top:756px' width='32' height='32' viewBox='0 0 16 16' fill='none'><path d='M1.5 4.5C1.5 3.4 2.4 2.5 3.5 2.5H5.59C5.98 2.5 6.37 2.66 6.65 2.94L7.85 4.15C8.13 4.43 8.52 4.59 8.91 4.59H12.5C13.6 4.59 14.5 5.48 14.5 6.59V11.5C14.5 12.6 13.6 13.5 12.5 13.5H3.5C2.4 13.5 1.5 12.6 1.5 11.5V4.5Z' fill='#43454A' stroke='#CED0D6' stroke-width='1'/></svg>
<svg style='left:149.5px;top:762px' width='20' height='20' viewBox='0 0 20 20' fill='none'><path d='M6.5 3 L13.5 10 L6.5 17' stroke='#B4B8BF' stroke-width='2' stroke-linecap='round' stroke-linejoin='round'/></svg>
<div class='t' style='left:224px;top:760.14px;font-size:27px;color:#DFE1E5;letter-spacing:0.600px'>lib</div>
<svg style='left:186px;top:804px' width='32' height='32' viewBox='0 0 16 16' fill='none'><path d='M1.5 4.5C1.5 3.4 2.4 2.5 3.5 2.5H5.59C5.98 2.5 6.37 2.66 6.65 2.94L7.85 4.15C8.13 4.43 8.52 4.59 8.91 4.59H12.5C13.6 4.59 14.5 5.48 14.5 6.59V11.5C14.5 12.6 13.6 13.5 12.5 13.5H3.5C2.4 13.5 1.5 12.6 1.5 11.5V4.5Z' fill='#43454A' stroke='#CED0D6' stroke-width='1'/></svg>
<svg style='left:150px;top:810px' width='20' height='20' viewBox='0 0 20 20' fill='none'><path d='M3 6.5 L10 13.5 L17 6.5' stroke='#B4B8BF' stroke-width='2' stroke-linecap='round' stroke-linejoin='round'/></svg>
<div class='t' style='left:224px;top:808.14px;font-size:27px;color:#DFE1E5;transform:scaleX(1.0263);transform-origin:0 0'>module</div>
<svg style='left:224px;top:852px' width='32' height='32' viewBox='0 0 16 16' fill='none'><path d='M1.5 4.5C1.5 3.4 2.4 2.5 3.5 2.5H5.59C5.98 2.5 6.37 2.66 6.65 2.94L7.85 4.15C8.13 4.43 8.52 4.59 8.91 4.59H12.5C13.6 4.59 14.5 5.48 14.5 6.59V11.5C14.5 12.6 13.6 13.5 12.5 13.5H3.5C2.4 13.5 1.5 12.6 1.5 11.5V4.5Z' fill='#43454A' stroke='#CED0D6' stroke-width='1'/></svg>
<svg style='left:188px;top:858px' width='20' height='20' viewBox='0 0 20 20' fill='none'><path d='M3 6.5 L10 13.5 L17 6.5' stroke='#B4B8BF' stroke-width='2' stroke-linecap='round' stroke-linejoin='round'/></svg>
<div class='t' style='left:262px;top:856.14px;font-size:27px;color:#DFE1E5;transform:scaleX(1.0587);transform-origin:0 0'>action</div>
<svg style='left:262px;top:900px' width='32' height='32' viewBox='0 0 16 16' fill='none'><path d='M1.5 4.5C1.5 3.4 2.4 2.5 3.5 2.5H5.59C5.98 2.5 6.37 2.66 6.65 2.94L7.85 4.15C8.13 4.43 8.52 4.59 8.91 4.59H12.5C13.6 4.59 14.5 5.48 14.5 6.59V11.5C14.5 12.6 13.6 13.5 12.5 13.5H3.5C2.4 13.5 1.5 12.6 1.5 11.5V4.5Z' fill='#43454A' stroke='#CED0D6' stroke-width='1'/></svg>
<svg style='left:225.5px;top:906px' width='20' height='20' viewBox='0 0 20 20' fill='none'><path d='M6.5 3 L13.5 10 L6.5 17' stroke='#B4B8BF' stroke-width='2' stroke-linecap='round' stroke-linejoin='round'/></svg>
<div class='t' style='left:300px;top:904.14px;font-size:27px;color:#DFE1E5;letter-spacing:0.600px'>css</div>
<svg style='left:262px;top:948px' width='32' height='32' viewBox='0 0 16 16' fill='none'><path d='M1.5 4.5C1.5 3.4 2.4 2.5 3.5 2.5H5.59C5.98 2.5 6.37 2.66 6.65 2.94L7.85 4.15C8.13 4.43 8.52 4.59 8.91 4.59H12.5C13.6 4.59 14.5 5.48 14.5 6.59V11.5C14.5 12.6 13.6 13.5 12.5 13.5H3.5C2.4 13.5 1.5 12.6 1.5 11.5V4.5Z' fill='#43454A' stroke='#CED0D6' stroke-width='1'/></svg>
<svg style='left:225.5px;top:954px' width='20' height='20' viewBox='0 0 20 20' fill='none'><path d='M6.5 3 L13.5 10 L6.5 17' stroke='#B4B8BF' stroke-width='2' stroke-linecap='round' stroke-linejoin='round'/></svg>
<div class='t' style='left:300px;top:952.14px;font-size:27px;color:#DFE1E5;letter-spacing:0.600px'>lang</div>
<svg style='left:262px;top:996px' width='32' height='32' viewBox='0 0 16 16' fill='none'><path d='M1.5 4.5C1.5 3.4 2.4 2.5 3.5 2.5H5.59C5.98 2.5 6.37 2.66 6.65 2.94L7.85 4.15C8.13 4.43 8.52 4.59 8.91 4.59H12.5C13.6 4.59 14.5 5.48 14.5 6.59V11.5C14.5 12.6 13.6 13.5 12.5 13.5H3.5C2.4 13.5 1.5 12.6 1.5 11.5V4.5Z' fill='#43454A' stroke='#CED0D6' stroke-width='1'/></svg>
<svg style='left:225.5px;top:1002px' width='20' height='20' viewBox='0 0 20 20' fill='none'><path d='M6.5 3 L13.5 10 L6.5 17' stroke='#B4B8BF' stroke-width='2' stroke-linecap='round' stroke-linejoin='round'/></svg>
<div class='t' style='left:300px;top:1000.14px;font-size:27px;color:#DFE1E5;letter-spacing:0.600px'>view</div>
<div class='t' style='left:262px;top:1049.59px;font-size:17.5px;color:#548AF7;font-weight:700;font-style:italic;transform:scaleX(0.9890);transform-origin:0 0'>php</div>
<div class='t' style='left:300px;top:1048.14px;font-size:27px;color:#DFE1E5;letter-spacing:0.600px'>config.php</div>
<div class='t' style='left:262px;top:1097.59px;font-size:17.5px;color:#548AF7;font-weight:700;font-style:italic;transform:scaleX(0.9890);transform-origin:0 0'>php</div>
<div class='t' style='left:300px;top:1096.14px;font-size:27px;color:#DFE1E5;letter-spacing:0.600px'>control.php</div>
<div class='t' style='left:262px;top:1145.59px;font-size:17.5px;color:#548AF7;font-weight:700;font-style:italic;transform:scaleX(0.9890);transform-origin:0 0'>php</div>
<div class='t' style='left:300px;top:1144.14px;font-size:27px;color:#DFE1E5;letter-spacing:0.600px'>model.php</div>
<svg style='left:224px;top:1188px' width='32' height='32' viewBox='0 0 16 16' fill='none'><path d='M1.5 4.5C1.5 3.4 2.4 2.5 3.5 2.5H5.59C5.98 2.5 6.37 2.66 6.65 2.94L7.85 4.15C8.13 4.43 8.52 4.59 8.91 4.59H12.5C13.6 4.59 14.5 5.48 14.5 6.59V11.5C14.5 12.6 13.6 13.5 12.5 13.5H3.5C2.4 13.5 1.5 12.6 1.5 11.5V4.5Z' fill='#43454A' stroke='#CED0D6' stroke-width='1'/></svg>
<svg style='left:187.5px;top:1194px' width='20' height='20' viewBox='0 0 20 20' fill='none'><path d='M6.5 3 L13.5 10 L6.5 17' stroke='#B4B8BF' stroke-width='2' stroke-linecap='round' stroke-linejoin='round'/></svg>
<div class='t' style='left:262px;top:1192.14px;font-size:27px;color:#DFE1E5;letter-spacing:0.600px'>admin</div>
<svg style='left:224px;top:1236px' width='32' height='32' viewBox='0 0 16 16' fill='none'><path d='M1.5 4.5C1.5 3.4 2.4 2.5 3.5 2.5H5.59C5.98 2.5 6.37 2.66 6.65 2.94L7.85 4.15C8.13 4.43 8.52 4.59 8.91 4.59H12.5C13.6 4.59 14.5 5.48 14.5 6.59V11.5C14.5 12.6 13.6 13.5 12.5 13.5H3.5C2.4 13.5 1.5 12.6 1.5 11.5V4.5Z' fill='#43454A' stroke='#CED0D6' stroke-width='1'/></svg>
<svg style='left:187.5px;top:1242px' width='20' height='20' viewBox='0 0 20 20' fill='none'><path d='M6.5 3 L13.5 10 L6.5 17' stroke='#B4B8BF' stroke-width='2' stroke-linecap='round' stroke-linejoin='round'/></svg>
<div class='t' style='left:262px;top:1240.14px;font-size:27px;color:#DFE1E5;letter-spacing:0.600px'>api</div>
<svg style='left:224px;top:1284px' width='32' height='32' viewBox='0 0 16 16' fill='none'><path d='M1.5 4.5C1.5 3.4 2.4 2.5 3.5 2.5H5.59C5.98 2.5 6.37 2.66 6.65 2.94L7.85 4.15C8.13 4.43 8.52 4.59 8.91 4.59H12.5C13.6 4.59 14.5 5.48 14.5 6.59V11.5C14.5 12.6 13.6 13.5 12.5 13.5H3.5C2.4 13.5 1.5 12.6 1.5 11.5V4.5Z' fill='#43454A' stroke='#CED0D6' stroke-width='1'/></svg>
<svg style='left:187.5px;top:1290px' width='20' height='20' viewBox='0 0 20 20' fill='none'><path d='M6.5 3 L13.5 10 L6.5 17' stroke='#B4B8BF' stroke-width='2' stroke-linecap='round' stroke-linejoin='round'/></svg>
<div class='t' style='left:262px;top:1288.14px;font-size:27px;color:#DFE1E5;letter-spacing:0.600px'>automation</div>
<svg style='left:224px;top:1332px' width='32' height='32' viewBox='0 0 16 16' fill='none'><path d='M1.5 4.5C1.5 3.4 2.4 2.5 3.5 2.5H5.59C5.98 2.5 6.37 2.66 6.65 2.94L7.85 4.15C8.13 4.43 8.52 4.59 8.91 4.59H12.5C13.6 4.59 14.5 5.48 14.5 6.59V11.5C14.5 12.6 13.6 13.5 12.5 13.5H3.5C2.4 13.5 1.5 12.6 1.5 11.5V4.5Z' fill='#43454A' stroke='#CED0D6' stroke-width='1'/></svg>
<svg style='left:187.5px;top:1338px' width='20' height='20' viewBox='0 0 20 20' fill='none'><path d='M6.5 3 L13.5 10 L6.5 17' stroke='#B4B8BF' stroke-width='2' stroke-linecap='round' stroke-linejoin='round'/></svg>
<div class='t' style='left:262px;top:1336.14px;font-size:27px;color:#DFE1E5;letter-spacing:0.600px'>backup</div>
<svg style='left:224px;top:1380px' width='32' height='32' viewBox='0 0 16 16' fill='none'><path d='M1.5 4.5C1.5 3.4 2.4 2.5 3.5 2.5H5.59C5.98 2.5 6.37 2.66 6.65 2.94L7.85 4.15C8.13 4.43 8.52 4.59 8.91 4.59H12.5C13.6 4.59 14.5 5.48 14.5 6.59V11.5C14.5 12.6 13.6 13.5 12.5 13.5H3.5C2.4 13.5 1.5 12.6 1.5 11.5V4.5Z' fill='#43454A' stroke='#CED0D6' stroke-width='1'/></svg>
<svg style='left:187.5px;top:1386px' width='20' height='20' viewBox='0 0 20 20' fill='none'><path d='M6.5 3 L13.5 10 L6.5 17' stroke='#B4B8BF' stroke-width='2' stroke-linecap='round' stroke-linejoin='round'/></svg>
<div class='t' style='left:262px;top:1384.14px;font-size:27px;color:#DFE1E5;letter-spacing:0.600px'>block</div>
<svg style='left:224px;top:1428px' width='32' height='32' viewBox='0 0 16 16' fill='none'><path d='M1.5 4.5C1.5 3.4 2.4 2.5 3.5 2.5H5.59C5.98 2.5 6.37 2.66 6.65 2.94L7.85 4.15C8.13 4.43 8.52 4.59 8.91 4.59H12.5C13.6 4.59 14.5 5.48 14.5 6.59V11.5C14.5 12.6 13.6 13.5 12.5 13.5H3.5C2.4 13.5 1.5 12.6 1.5 11.5V4.5Z' fill='#43454A' stroke='#CED0D6' stroke-width='1'/></svg>
<svg style='left:187.5px;top:1434px' width='20' height='20' viewBox='0 0 20 20' fill='none'><path d='M6.5 3 L13.5 10 L6.5 17' stroke='#B4B8BF' stroke-width='2' stroke-linecap='round' stroke-linejoin='round'/></svg>
<div class='t' style='left:262px;top:1432.14px;font-size:27px;color:#DFE1E5;letter-spacing:0.600px'>branch</div>
<svg style='left:224px;top:1476px' width='32' height='32' viewBox='0 0 16 16' fill='none'><path d='M1.5 4.5C1.5 3.4 2.4 2.5 3.5 2.5H5.59C5.98 2.5 6.37 2.66 6.65 2.94L7.85 4.15C8.13 4.43 8.52 4.59 8.91 4.59H12.5C13.6 4.59 14.5 5.48 14.5 6.59V11.5C14.5 12.6 13.6 13.5 12.5 13.5H3.5C2.4 13.5 1.5 12.6 1.5 11.5V4.5Z' fill='#43454A' stroke='#CED0D6' stroke-width='1'/></svg>
<svg style='left:187.5px;top:1482px' width='20' height='20' viewBox='0 0 20 20' fill='none'><path d='M6.5 3 L13.5 10 L6.5 17' stroke='#B4B8BF' stroke-width='2' stroke-linecap='round' stroke-linejoin='round'/></svg>
<div class='t' style='left:262px;top:1480.14px;font-size:27px;color:#DFE1E5;letter-spacing:0.600px'>bug</div>
<svg style='left:224px;top:1524px' width='32' height='32' viewBox='0 0 16 16' fill='none'><path d='M1.5 4.5C1.5 3.4 2.4 2.5 3.5 2.5H5.59C5.98 2.5 6.37 2.66 6.65 2.94L7.85 4.15C8.13 4.43 8.52 4.59 8.91 4.59H12.5C13.6 4.59 14.5 5.48 14.5 6.59V11.5C14.5 12.6 13.6 13.5 12.5 13.5H3.5C2.4 13.5 1.5 12.6 1.5 11.5V4.5Z' fill='#43454A' stroke='#CED0D6' stroke-width='1'/></svg>
<svg style='left:187.5px;top:1530px' width='20' height='20' viewBox='0 0 20 20' fill='none'><path d='M6.5 3 L13.5 10 L6.5 17' stroke='#B4B8BF' stroke-width='2' stroke-linecap='round' stroke-linejoin='round'/></svg>
<div class='t' style='left:262px;top:1528.14px;font-size:27px;color:#DFE1E5;letter-spacing:0.600px'>build</div>
<svg style='left:224px;top:1572px' width='32' height='32' viewBox='0 0 16 16' fill='none'><path d='M1.5 4.5C1.5 3.4 2.4 2.5 3.5 2.5H5.59C5.98 2.5 6.37 2.66 6.65 2.94L7.85 4.15C8.13 4.43 8.52 4.59 8.91 4.59H12.5C13.6 4.59 14.5 5.48 14.5 6.59V11.5C14.5 12.6 13.6 13.5 12.5 13.5H3.5C2.4 13.5 1.5 12.6 1.5 11.5V4.5Z' fill='#43454A' stroke='#CED0D6' stroke-width='1'/></svg>
<svg style='left:187.5px;top:1578px' width='20' height='20' viewBox='0 0 20 20' fill='none'><path d='M6.5 3 L13.5 10 L6.5 17' stroke='#B4B8BF' stroke-width='2' stroke-linecap='round' stroke-linejoin='round'/></svg>
<div class='t' style='left:262px;top:1576.14px;font-size:27px;color:#DFE1E5;letter-spacing:0.600px'>caselib</div>
<svg style='left:224px;top:1620px' width='32' height='32' viewBox='0 0 16 16' fill='none'><path d='M1.5 4.5C1.5 3.4 2.4 2.5 3.5 2.5H5.59C5.98 2.5 6.37 2.66 6.65 2.94L7.85 4.15C8.13 4.43 8.52 4.59 8.91 4.59H12.5C13.6 4.59 14.5 5.48 14.5 6.59V11.5C14.5 12.6 13.6 13.5 12.5 13.5H3.5C2.4 13.5 1.5 12.6 1.5 11.5V4.5Z' fill='#43454A' stroke='#CED0D6' stroke-width='1'/></svg>
<svg style='left:187.5px;top:1626px' width='20' height='20' viewBox='0 0 20 20' fill='none'><path d='M6.5 3 L13.5 10 L6.5 17' stroke='#B4B8BF' stroke-width='2' stroke-linecap='round' stroke-linejoin='round'/></svg>
<div class='t' style='left:262px;top:1624.14px;font-size:27px;color:#DFE1E5;letter-spacing:0.600px'>ci</div>
<div class='abs' style='left:632px;top:166px;width:16px;height:326px;background:#4C4D51'></div>
</div></div>
<svg style='left:18px;top:18px' width='44' height='44' viewBox='18 18 44 44' fill='none'><defs><linearGradient id='psA' x1='0.3' y1='0' x2='0.45' y2='1'><stop offset='0' stop-color='#FF2F8E'/><stop offset='0.35' stop-color='#F03CA8'/><stop offset='0.65' stop-color='#C048E8'/><stop offset='1' stop-color='#6B5CFF'/></linearGradient><linearGradient id='psB' x1='0.2' y1='0' x2='0.7' y2='1'><stop offset='0' stop-color='#C678FF'/><stop offset='0.4' stop-color='#9A40E6'/><stop offset='0.62' stop-color='#C84EF0'/><stop offset='0.8' stop-color='#8A56FF'/><stop offset='1' stop-color='#6A58FF'/></linearGradient><linearGradient id='psC' x1='0' y1='0' x2='1' y2='1'><stop offset='0' stop-color='#2A0A3A'/><stop offset='0.5' stop-color='#12041C'/><stop offset='1' stop-color='#050108'/></linearGradient></defs><path d='M29.6 23.7 L41 26.6 L39.4 30 L33 50.4 L26.9 47.8 L23.8 29.6 Z' fill='url(#psA)'/><path d='M29.6 23.7 L41 26.6 L39.4 30 L23.8 29.6 Z' fill='#FF3C98'/><path d='M39.4 29.4 L43.2 25.9 L52.2 27.1 L56 37.3 L52.4 41.4 L56.2 48.2 L44.2 56 L33 51.6 L33 40 Z' fill='url(#psB)'/><rect x='30.2' y='30.2' width='19.5' height='19.5' fill='url(#psC)'/><rect x='32.2' y='45.9' width='7.9' height='1.7' fill='#E8E8E8'/><text x='31.8' y='40.2' font-family='Liberation Sans' font-weight='700' font-size='11' fill='#FFFFFF' textLength='13.6' lengthAdjust='spacingAndGlyphs'>PS</text></svg>
<svg style='left:102px;top:24px' width='32' height='32' viewBox='0 0 32 32' fill='none'><rect x='0' y='1.0' width='32' height='3' rx='1.5' fill='#CED0D6'/><rect x='0' y='10.0' width='32' height='3' rx='1.5' fill='#CED0D6'/><rect x='0' y='19.0' width='32' height='3' rx='1.5' fill='#CED0D6'/><rect x='0' y='28.0' width='32' height='3' rx='1.5' fill='#CED0D6'/></svg>
<div class='abs' style='left:176px;top:20px;width:40px;height:40px;border-radius:9px;background:linear-gradient(45deg,#86AE52 0%,#93AB59 50%,#A9AE61 100%)'></div>
<div class='t' style='left:180.2px;top:27.3px;font-size:27px;color:#FFFFFF;transform:scaleX(0.6);transform-origin:0 0;font-weight:400;-webkit-text-stroke:0.5px #fff'>WW</div>
<div class='t' style='left:229px;top:27.07px;font-size:26.5px;color:#DFE1E5;transform:scaleX(0.9921);transform-origin:0 0'>WWW</div>
<svg style='left:314px;top:30px' width='20' height='20' viewBox='0 0 20 20' fill='none'><path d='M3 6.5 L10 13.5 L17 6.5' stroke='#B4B8BF' stroke-width='2' stroke-linecap='round' stroke-linejoin='round'/></svg>
<svg style='left:371.3px;top:25.20px' width='106' height='36' viewBox='0 -26 106 36'><path d='M12.58 -19.45V-11.39C12.58 -6.6 12.22 -1.9 9.31 1.74L9.7 2.03C13.86 -1.56 14.2 -6.86 14.2 -11.41V-12.87H15.26C15.76 -9.39 16.64 -6.42 17.99 -3.98C16.41 -1.72 14.33 0.26 11.65 1.77L11.91 2.16C14.79 0.86 17 -0.83 18.69 -2.81C19.99 -0.83 21.66 0.78 23.74 2C24.08 1.25 24.65 0.86 25.35 0.83L25.4 0.6C23.09 -0.47 21.14 -2 19.6 -3.95C21.48 -6.55 22.62 -9.54 23.4 -12.66C23.97 -12.71 24.26 -12.77 24.47 -13L22.65 -14.69L21.55 -13.65H14.2V-18.8C16.82 -18.85 20.59 -19.24 23.4 -19.81C23.79 -19.58 24.05 -19.58 24.31 -19.76L22.7 -21.66C19.89 -20.72 16.61 -19.86 14.09 -19.37L12.58 -20.05ZM5.07 -20.67 2.57 -20.96V-8.45C2.57 -4.19 2.26 -1.01 0.81 1.79L1.25 2.05C3.51 -0.73 4.11 -4.03 4.16 -8.27H7.49V1.82H7.72C8.29 1.82 9.07 1.38 9.1 1.2V-7.98C9.62 -8.09 10.04 -8.27 10.22 -8.48L8.16 -10.09L7.23 -9.05H4.16V-13.31H11.28C11.62 -13.31 11.88 -13.44 11.93 -13.73C11.28 -14.46 10.14 -15.42 10.14 -15.42L9.15 -14.07H8.68V-20.72C9.31 -20.83 9.57 -21.06 9.62 -21.4L7.07 -21.68V-14.07H4.16V-19.97C4.81 -20.05 5.02 -20.31 5.07 -20.67ZM18.75 -5.15C17.34 -7.31 16.35 -9.91 15.81 -12.87H21.68C21.11 -10.11 20.15 -7.49 18.75 -5.15ZM47.79 -17.76 46.46 -16.04H39.81V-20.77C40.51 -20.88 40.72 -21.14 40.79 -21.53L38.09 -21.84V-16.04H27.82L28.05 -15.29H36.76C34.87 -10.32 31.36 -5.28 26.88 -1.95L27.2 -1.61C32.11 -4.52 35.83 -8.74 38.09 -13.52V-4.47H32.42L32.63 -3.69H38.09V2H38.43C39.1 2 39.81 1.61 39.81 1.38V-3.69H45.03C45.4 -3.69 45.6 -3.82 45.68 -4.11C44.82 -4.97 43.45 -6.11 43.45 -6.11L42.2 -4.47H39.81V-15.24C41.81 -9.65 45.27 -5.07 49.11 -2.52C49.43 -3.35 50.08 -3.9 50.86 -3.95L50.91 -4.21C46.9 -6.21 42.69 -10.5 40.35 -15.29H49.56C49.92 -15.29 50.15 -15.42 50.23 -15.7C49.32 -16.56 47.79 -17.76 47.79 -17.76ZM68.56 -14.51 66.27 -15.68C65 -12.95 63.1 -10.48 61.39 -9.02L61.72 -8.68C63.8 -9.83 65.94 -11.75 67.52 -14.17C68.07 -14.04 68.41 -14.22 68.56 -14.51ZM66.85 -21.79 66.56 -21.58C67.47 -20.7 68.46 -19.11 68.56 -17.84C70.2 -16.51 71.81 -20.02 66.85 -21.79ZM63.18 -18.56 62.71 -18.59C62.87 -17.37 62.37 -15.81 61.83 -15.21C61.33 -14.79 61.07 -14.22 61.36 -13.75C61.75 -13.18 62.63 -13.36 63.02 -13.88C63.44 -14.4 63.67 -15.37 63.57 -16.61H74.23L73.37 -13.55C72.54 -14.14 71.45 -14.77 70.04 -15.37L69.76 -15.13C71.29 -13.68 73.48 -11.26 74.28 -9.57C75.87 -8.68 76.78 -11 73.45 -13.49L73.74 -13.36C74.41 -14.12 75.56 -15.52 76.15 -16.33C76.65 -16.35 76.93 -16.41 77.14 -16.59L75.22 -18.46L74.15 -17.39H63.47C63.39 -17.76 63.31 -18.15 63.18 -18.56ZM73.35 -9.62 72.1 -8.09H62.58L62.79 -7.31H67.91V0.23H60.55L60.76 1.01H76.36C76.75 1.01 76.99 0.88 77.06 0.6C76.18 -0.21 74.8 -1.3 74.8 -1.3L73.55 0.23H69.6V-7.31H74.91C75.27 -7.31 75.53 -7.44 75.61 -7.72C74.75 -8.53 73.35 -9.62 73.35 -9.62ZM60.06 -17.34 58.99 -15.94H58.37V-20.83C58.99 -20.9 59.25 -21.14 59.33 -21.5L56.73 -21.79V-15.94H53.04L53.25 -15.16H56.73V-9.62C54.99 -8.94 53.56 -8.4 52.73 -8.16L53.72 -6.03C53.95 -6.14 54.13 -6.42 54.21 -6.73L56.73 -8.14V-0.75C56.73 -0.36 56.6 -0.21 56.11 -0.21C55.59 -0.21 53.01 -0.42 53.01 -0.42V0.03C54.16 0.16 54.81 0.36 55.2 0.68C55.54 0.99 55.67 1.46 55.74 1.98C58.11 1.74 58.37 0.83 58.37 -0.55V-9.1L62.14 -11.36L61.98 -11.75L58.37 -10.27V-15.16H61.33C61.7 -15.16 61.96 -15.29 62.01 -15.57C61.28 -16.35 60.06 -17.34 60.06 -17.34ZM95.39 -19.55V-3.25H95.71C96.28 -3.25 96.98 -3.59 96.98 -3.85V-18.59C97.6 -18.67 97.84 -18.93 97.92 -19.29ZM100.05 -21.29V-0.6C100.05 -0.21 99.92 -0.05 99.48 -0.05C98.98 -0.05 96.51 -0.23 96.51 -0.23V0.18C97.6 0.31 98.23 0.52 98.57 0.78C98.93 1.09 99.06 1.51 99.11 2.03C101.4 1.79 101.66 0.94 101.66 -0.44V-20.31C102.28 -20.38 102.54 -20.64 102.62 -21.01ZM80.47 -9.26V0.34H80.7C81.38 0.34 82.06 -0.05 82.06 -0.21V-8.48H85.62V2H85.93C86.55 2 87.26 1.61 87.26 1.35V-8.48H90.84V-2.34C90.84 -2.03 90.77 -1.9 90.45 -1.9C90.09 -1.9 88.69 -2.03 88.69 -2.03V-1.61C89.39 -1.48 89.78 -1.3 90.01 -1.07C90.25 -0.78 90.35 -0.29 90.38 0.21C92.25 -0.03 92.48 -0.81 92.48 -2.16V-8.16C93 -8.24 93.44 -8.48 93.6 -8.66L91.44 -10.24L90.58 -9.26H87.26V-12.38H93.68C94.04 -12.38 94.3 -12.51 94.35 -12.79C93.52 -13.57 92.17 -14.64 92.17 -14.64L90.97 -13.13H87.26V-16.64H92.79C93.16 -16.64 93.44 -16.77 93.5 -17.06C92.66 -17.84 91.31 -18.9 91.31 -18.9L90.14 -17.39H87.26V-20.67C87.91 -20.77 88.11 -21.03 88.17 -21.4L85.62 -21.68V-17.39H82.47C82.89 -18.12 83.25 -18.88 83.56 -19.68C84.11 -19.66 84.4 -19.86 84.5 -20.18L81.98 -20.93C81.41 -18.36 80.44 -15.76 79.4 -14.07L79.79 -13.81C80.6 -14.56 81.38 -15.55 82.06 -16.64H85.62V-13.13H78.83L79.04 -12.38H85.62V-9.26H82.21L80.47 -10.04Z' fill='#DFE1E5'/></svg>
<svg style='left:486px;top:30px' width='20' height='20' viewBox='0 0 20 20' fill='none'><path d='M3 6.5 L10 13.5 L17 6.5' stroke='#B4B8BF' stroke-width='2' stroke-linecap='round' stroke-linejoin='round'/></svg>
<svg style='left:0px;top:0px' width='2879' height='80' viewBox='0 0 2879 80' fill='none'><g stroke='#CED0D6' stroke-width='2.6' stroke-linecap='round' fill='none'><path d='M1789.2 24.4 C1788.2 24.0 1787.2 23.8 1786.2 23.8 C1781.5 23.8 1778.6 26.6 1778.6 29.6'/><path d='M1777.4 31.6 H1786.6'/><path d='M1776.8 32.0 V44.8 A9.5 9.5 0 0 0 1795.8 44.8 V38.4'/><path d='M1770.9 32.4 L1776.0 35.3 M1768.9 41.9 H1776 M1770.9 51.4 L1776 48.6 M1796.6 41.9 H1803.2 M1796.6 48.6 L1801.2 51.4'/></g><circle cx='1791' cy='34.9' r='3.1' fill='#57A55F'/><path d='M1794.0 26.8 A8.6 8.6 0 0 1 1799.5 33.4' stroke='#57A55F' stroke-width='3' stroke-linecap='round' fill='none'/><path d='M1793.6 21.0 A14.1 14.1 0 0 1 1804.9 32.6' stroke='#57A55F' stroke-width='3' stroke-linecap='round' fill='none'/></svg>
<svg style='left:0px;top:0px' width='2879' height='80' viewBox='0 0 2879 80' fill='none'><g stroke='#CED0D6' stroke-width='1.7' fill='none'><circle cx='1890' cy='33.8' r='7.4'/><ellipse cx='1890' cy='33.8' rx='3.1' ry='7.4'/><path d='M1882.8 31.4 H1897.2 M1882.8 36.4 H1897.2'/></g></svg>
<div class='abs' style='left:1872px;top:39.5px;width:36px;height:5px;background:#3C3F41'></div>
<div class='t' style='left:1874.2px;top:37.89px;font-size:17.5px;color:#548AF7;font-weight:700;font-style:italic;transform:scaleX(1.0046);transform-origin:0 0'>php</div>
<svg style='left:1919px;top:24.50px' width='80' height='36' viewBox='0 -26 80 36'><path d='M12.06 -21.79V-17.03H3.28L3.48 -16.28H12.06V-11.57H1.27L1.51 -10.82H10.61C8.55 -6.81 4.99 -2.81 0.86 -0.16L1.14 0.26C5.8 -2.11 9.62 -5.59 12.06 -9.59V2.03H12.4C13.05 2.03 13.78 1.59 13.78 1.33V-10.82H13.83C15.94 -5.93 19.53 -2.08 23.45 0.05C23.74 -0.81 24.36 -1.33 25.09 -1.4L25.14 -1.66C21.14 -3.22 16.82 -6.76 14.48 -10.82H24.05C24.41 -10.82 24.67 -10.95 24.73 -11.23C23.79 -12.06 22.28 -13.23 22.28 -13.23L20.96 -11.57H13.78V-16.28H22.15C22.52 -16.28 22.78 -16.41 22.85 -16.69C21.94 -17.52 20.49 -18.62 20.49 -18.62L19.19 -17.03H13.78V-20.77C14.46 -20.88 14.66 -21.14 14.74 -21.5ZM33.36 -14.14 33.57 -13.36H43.78C44.15 -13.36 44.38 -13.49 44.46 -13.78C43.63 -14.56 42.28 -15.55 42.28 -15.55L41.11 -14.14ZM39.52 -20.46C41.5 -17.11 45.47 -14.04 49.74 -12.22C49.92 -12.84 50.52 -13.44 51.3 -13.6L51.32 -13.99C46.83 -15.47 42.41 -17.91 40.01 -20.77C40.69 -20.85 40.98 -20.98 41.05 -21.27L37.99 -21.97C36.58 -18.56 31.28 -13.94 26.81 -11.75L26.96 -11.36C31.95 -13.29 37.08 -17.11 39.52 -20.46ZM29.98 -10.3V0.18H30.26C30.91 0.18 31.59 -0.18 31.59 -0.36V-2.63H36.04V-0.65H36.3C36.82 -0.65 37.62 -1.07 37.65 -1.2V-9.33C38.09 -9.41 38.48 -9.59 38.64 -9.78L36.69 -11.28L35.8 -10.3H31.72L29.98 -11.1ZM36.04 -3.38H31.59V-9.57H36.04ZM40.25 -10.43V1.95H40.51C41.18 1.95 41.86 1.53 41.86 1.38V-9.67H46.7V-2.78C46.7 -2.44 46.59 -2.29 46.18 -2.29C45.68 -2.29 43.68 -2.44 43.68 -2.44V-2.03C44.62 -1.92 45.16 -1.72 45.47 -1.48C45.73 -1.22 45.86 -0.81 45.89 -0.34C48.07 -0.55 48.33 -1.3 48.33 -2.6V-9.41C48.83 -9.49 49.24 -9.7 49.37 -9.88L47.27 -11.44L46.44 -10.43H41.99L40.25 -11.26ZM65.47 -20.93 62.71 -21.81C60.84 -17.81 57.07 -13.13 53.46 -10.45L53.74 -10.14C56.03 -11.41 58.27 -13.29 60.22 -15.29C61.39 -14.12 62.66 -12.45 63 -11.1C64.74 -9.85 66.09 -13.39 60.63 -15.7C61.23 -16.35 61.8 -17 62.32 -17.65H71.03C67.63 -11.96 60.87 -7.23 52.99 -4.65L53.22 -4.19C55.8 -4.84 58.19 -5.69 60.37 -6.68V2.05H60.66C61.52 2.05 62.09 1.61 62.09 1.48V0.03H73.09V1.95H73.35C73.94 1.95 74.8 1.53 74.83 1.35V-6.71C75.35 -6.81 75.76 -6.99 75.95 -7.23L73.79 -8.89L72.8 -7.8H62.61C67.18 -10.3 70.75 -13.57 73.16 -17.34C73.87 -17.37 74.18 -17.42 74.39 -17.65L72.46 -19.55L71.16 -18.43H62.92C63.49 -19.19 64.01 -19.92 64.45 -20.64C65.13 -20.54 65.34 -20.64 65.47 -20.93ZM62.09 -7.02H73.09V-0.73H62.09Z' fill='#DFE1E5'/></svg>
<svg style='left:2006px;top:32px' width='20' height='20' viewBox='0 0 20 20' fill='none'><path d='M3 6.5 L10 13.5 L17 6.5' stroke='#B4B8BF' stroke-width='2' stroke-linecap='round' stroke-linejoin='round'/></svg>
<svg style='left:0px;top:0px' width='2879' height='80' viewBox='0 0 2879 80' fill='none'><path d='M2071.6 29.4 Q2071.6 26.6 2074 28 L2092.6 38.6 Q2094.8 39.9 2092.6 41.2 L2074 51.9 Q2071.6 53.2 2071.6 50.4 Z' stroke='#5FB865' stroke-width='3' stroke-linejoin='round' fill='none'/></svg>
<svg style='left:0px;top:0px' width='2879' height='80' viewBox='0 0 2879 80' fill='none'><g stroke='#5FB865' stroke-width='3' stroke-linecap='round' fill='none'><rect x='2142.5' y='33.6' width='15.0' height='18.8' rx='7.5' ry='8.2'/><path d='M2145.4 34.0 V31.8 A4.6 4.6 0 0 1 2154.6 31.8 V34.0'/><path d='M2136.9 32.9 L2142.0 36.1 M2135.4 42.0 H2141.8 M2136.9 51.2 L2142.0 47.9'/><path d='M2163.1 32.9 L2158.0 36.1 M2164.6 42.0 H2158.2 M2163.1 51.2 L2158.0 47.9'/></g></svg>
<svg style='left:0px;top:0px' width='2879' height='80' viewBox='0 0 2879 80' fill='none'><circle cx='2218' cy='29.2' r='2.5' fill='#DFE1E5'/><circle cx='2218' cy='40' r='2.5' fill='#DFE1E5'/><circle cx='2218' cy='50.8' r='2.5' fill='#DFE1E5'/></svg>
<svg style='left:0px;top:0px' width='2879' height='80' viewBox='0 0 2879 80' fill='none'><g stroke='#CED0D6' stroke-width='3' stroke-linecap='round' stroke-linejoin='round' fill='none'><circle cx='2392' cy='30' r='6.7'/><path d='M2391.5 54.3 H2380.5 Q2379 54.3 2379.2 52.8 C2380.2 46 2385.4 41.4 2392 41.4 C2394.4 41.4 2396.6 42 2398.4 43.1'/><path d='M2396.6 51.5 H2410.4 M2403.5 44.5 V58.4'/></g></svg>
<svg style='left:0px;top:0px' width='2879' height='80' viewBox='0 0 2879 80' fill='none'><g stroke='#CED0D6' stroke-width='3' stroke-linecap='round' fill='none'><circle cx='2469.8' cy='38' r='12.4'/><path d='M2479 47.6 L2487.8 56.2'/></g></svg>
<svg style='left:0px;top:0px' width='2879' height='80' viewBox='0 0 2879 80' fill='none'><g stroke='#CED0D6' stroke-width='3.2' stroke-linejoin='round' fill='none'><path d='M2555.12 24.17 Q2554.64 23.41 2553.74 23.41 L2550.26 23.41 Q2549.36 23.41 2548.88 24.17 L2546.22 28.51 Q2545.75 29.27 2544.85 29.30 L2539.77 29.44 Q2538.87 29.46 2538.42 30.24 L2536.67 33.26 Q2536.22 34.04 2536.65 34.84 L2539.07 39.31 Q2539.50 40.10 2539.07 40.89 L2536.65 45.36 Q2536.22 46.16 2536.67 46.94 L2538.42 49.96 Q2538.87 50.74 2539.77 50.76 L2544.85 50.90 Q2545.75 50.93 2546.22 51.69 L2548.88 56.03 Q2549.36 56.79 2550.26 56.79 L2553.74 56.79 Q2554.64 56.79 2555.12 56.03 L2557.78 51.69 Q2558.25 50.93 2559.15 50.90 L2564.23 50.76 Q2565.13 50.74 2565.58 49.96 L2567.33 46.94 Q2567.78 46.16 2567.35 45.36 L2564.93 40.89 Q2564.50 40.10 2564.93 39.31 L2567.35 34.84 Q2567.78 34.04 2567.33 33.26 L2565.58 30.24 Q2565.13 29.46 2564.23 29.44 L2559.15 29.30 Q2558.25 29.27 2557.78 28.51Z'/><circle cx='2552' cy='40.1' r='5.55'/></g><circle cx='2565' cy='27' r='9.9' fill='#3C3F41'/><circle cx='2565' cy='27' r='7.2' fill='#F2C55C'/></svg>
<svg style='left:0px;top:0px' width='2879' height='80' viewBox='0 0 2879 80' fill='none'><path d='M2635.5 39 H2654.8' stroke='#8E9094' stroke-width='1.6'/><rect x='2730' y='35.6' width='13.8' height='13.6' rx='3' stroke='#8E9094' stroke-width='1.6' fill='none'/><path d='M2735 32.4 Q2735.3 31 2737.5 31 H2745 Q2748.4 31 2748.4 34.4 V42 Q2748.4 44 2746.8 44.4' stroke='#8E9094' stroke-width='1.6' fill='none'/><path d='M2824 30.6 L2843 49.6 M2843 30.6 L2824 49.6' stroke='#8E9094' stroke-width='1.6'/></svg>
<div class='abs' style='left:652px;top:162px;width:2148px;height:2px;background:#393B40'></div>
<div class='abs' style='left:1302px;top:156px;width:376px;height:8px;border-radius:4px;background:#5A5D63'></div>
<div class='t' style='left:676px;top:112.19px;font-size:17.5px;color:#4B6EB5;font-weight:700;font-style:italic;transform:scaleX(0.9890);transform-origin:0 0'>php</div>
<div class='t' style='left:719px;top:109.64px;font-size:27px;color:#B4B8BF;transform:scaleX(1.0374);transform-origin:0 0'>user\model.php</div>
<div class='t' style='left:996px;top:112.19px;font-size:17.5px;color:#4B6EB5;font-weight:700;font-style:italic;transform:scaleX(0.9890);transform-origin:0 0'>php</div>
<div class='t' style='left:1038.5px;top:109.64px;font-size:27px;color:#B4B8BF;transform:scaleX(1.0566);transform-origin:0 0'>user\control.php</div>
<div class='t' style='left:1326px;top:112.19px;font-size:17.5px;color:#548AF7;font-weight:700;font-style:italic;transform:scaleX(0.9890);transform-origin:0 0'>php</div>
<div class='t' style='left:1369px;top:109.64px;font-size:27px;color:#DFE1E5;transform:scaleX(1.0420);transform-origin:0 0'>common\model.php</div>
<div class='t' style='left:1700px;top:112.19px;font-size:17.5px;color:#4B6EB5;font-weight:700;font-style:italic;transform:scaleX(0.9890);transform-origin:0 0'>php</div>
<div class='t' style='left:1743px;top:109.64px;font-size:27px;color:#B4B8BF;transform:scaleX(1.0508);transform-origin:0 0'>filter.class.php</div>
<div class='t' style='left:2006px;top:112.19px;font-size:17.5px;color:#4B6EB5;font-weight:700;font-style:italic;transform:scaleX(0.9890);transform-origin:0 0'>php</div>
<div class='t' style='left:2048.5px;top:109.64px;font-size:27px;color:#B4B8BF;transform:scaleX(1.0555);transform-origin:0 0'>router.class.php</div>
<svg style='left:1636px;top:112px' width='20' height='20' viewBox='0 0 20 20' fill='none'><path d='M3.5 3.5 L16.5 16.5 M16.5 3.5 L3.5 16.5' stroke='#868A91' stroke-width='1.8' stroke-linecap='round'/></svg>
<svg style='left:2752px;top:100px' width='20' height='44' viewBox='0 0 20 44' fill='none'><circle cx='10' cy='11.400000000000006' r='2.3' fill='#CED0D6'/><circle cx='10' cy='22.200000000000003' r='2.3' fill='#CED0D6'/><circle cx='10' cy='33' r='2.3' fill='#CED0D6'/></svg>
<div class='abs' style='left:2460px;top:168px;width:340px;height:44px;background:#1E1F22'></div>
<svg style='left:2467.8px;top:174px' width='32' height='30' viewBox='0 0 32 30' fill='none'><path d='M16 7.2 L25.2 23 H6.8 Z' fill='#D6AE58' stroke='#D6AE58' stroke-width='6.4' stroke-linejoin='round'/><rect x='14.5' y='8.6' width='3' height='9' rx='1.2' fill='#1E1F22'/><circle cx='16' cy='21.4' r='1.9' fill='#1E1F22'/></svg>
<div class='t' style='left:2502.5px;top:178.44px;font-size:25px;color:#BCBEC4;letter-spacing:0.639px;transform:scaleX(1.1300);transform-origin:0 0'>66</div>
<svg style='left:2545.8px;top:174px' width='32' height='30' viewBox='0 0 32 30' fill='none'><path d='M16 7.2 L25.2 23 H6.8 Z' fill='#8A7340' stroke='#8A7340' stroke-width='6.4' stroke-linejoin='round'/><rect x='14.5' y='8.6' width='3' height='9' rx='1.2' fill='#1E1F22'/><circle cx='16' cy='21.4' r='1.9' fill='#1E1F22'/></svg>
<div class='t' style='left:2581px;top:178.44px;font-size:25px;color:#BCBEC4;transform:scaleX(1.0655);transform-origin:0 0'>319</div>
<svg style='left:2636px;top:176px' width='36' height='32' viewBox='0 0 36 32' fill='none'><path d='M8.2 14.5 L14.8 19.7 L27.2 6.4' stroke='#4CA458' stroke-width='5' stroke-linecap='butt' stroke-linejoin='miter' fill='none'/><path d='M6.7 27.6 L12 23.2 L17.4 27.6 L22.9 23.2 L28.2 26.6' stroke='#DB5C5C' stroke-width='1.8' fill='none' stroke-linejoin='miter'/></svg>
<div class='t' style='left:2672.5px;top:178.44px;font-size:25px;color:#BCBEC4;letter-spacing:0.373px;transform:scaleX(1.1300);transform-origin:0 0'>88</div>
<svg style='left:2723.8px;top:180px' width='20' height='20' viewBox='0 0 20 20' fill='none'><path d='M3 13.5 L10 6.5 L17 13.5' stroke='#B4B8BF' stroke-width='2' stroke-linecap='round' stroke-linejoin='round'/></svg>
<svg style='left:2766px;top:180px' width='20' height='20' viewBox='0 0 20 20' fill='none'><path d='M3 6.5 L10 13.5 L17 6.5' stroke='#B4B8BF' stroke-width='2' stroke-linecap='round' stroke-linejoin='round'/></svg>
<div class='abs' style='left:10px;top:92px;width:60px;height:60px;border-radius:12px;background:#4B4E56'></div>
<svg style='left:0px;top:0px' width='82' height='1715' viewBox='0 0 82 1715' fill='none'><path d='M23.5 113 Q23.5 108.5 28 108.5 H34.6 Q36.2 108.5 37.4 109.6 L41 113.2 Q42.2 114.3 43.8 114.3 H52.2 Q56.7 114.3 56.7 118.8 V130.8 Q56.7 135.3 52.2 135.3 H28 Q23.5 135.3 23.5 130.8 Z' stroke='#CED0D6' stroke-width='3' stroke-linejoin='round' fill='none'/><rect x='16' y='172' width='48' height='2' fill='#43454A'/><rect x='25.5' y='209.7' width='11.2' height='11' rx='3' stroke='#CED0D6' stroke-width='3' fill='none'/><rect x='25.5' y='227.2' width='11.2' height='11' rx='3' stroke='#CED0D6' stroke-width='3' fill='none'/><rect x='43.2' y='227.2' width='11.2' height='11' rx='3' stroke='#CED0D6' stroke-width='3' fill='none'/><circle cx='26.8' cy='304' r='3.1' fill='#CED0D6'/><circle cx='40' cy='304' r='3.1' fill='#CED0D6'/><circle cx='52.9' cy='304' r='3.1' fill='#CED0D6'/><g stroke='#CED0D6' stroke-width='3' stroke-linecap='round' fill='none'><path d='M30.9 1283.2 Q30.9 1277.9 36.2 1277.9 H44 Q49.3 1277.9 49.3 1283.2 V1291.3 A9.2 9.2 0 0 1 30.9 1291.3 Z'/><path d='M34.6 1277.9 A5.5 5.5 0 0 1 45.6 1277.9'/><path d='M24.9 1278.5 L30.1 1281.3 M22.6 1288 H29.4 M24.9 1297.5 L30.4 1294.7 M55.3 1278.5 L50.1 1281.3 M57.6 1288 H50.8 M55.3 1297.5 L49.8 1294.7'/></g><path d='M31.8 1350.9 H48.2 Q50.2 1350.9 51.2 1352.6 L57.2 1364.2 Q58 1365.9 57.2 1367.6 L51.2 1379.4 Q50.2 1381.1 48.2 1381.1 H31.8 Q29.8 1381.1 28.8 1379.4 L22.8 1367.6 Q22 1365.9 22.8 1364.2 L28.8 1352.6 Q29.8 1350.9 31.8 1350.9 Z' stroke='#CED0D6' stroke-width='3' stroke-linejoin='round' fill='none'/><path d='M35.6 1358.6 L48 1365.9 L35.6 1373.4 Z' stroke='#CED0D6' stroke-width='3' stroke-linejoin='round' fill='none'/><rect x='23.6' y='1431.8' width='32.8' height='28.6' rx='3.5' stroke='#CED0D6' stroke-width='3' fill='none'/><path d='M31.2 1439 L38.2 1444 L31.2 1449 M40.4 1451.6 H48.4' stroke='#CED0D6' stroke-width='3' stroke-linecap='round' stroke-linejoin='round' fill='none'/><circle cx='40' cy='1526.2' r='16.4' stroke='#CED0D6' stroke-width='3' fill='none'/><path d='M40 1517 V1528.4' stroke='#CED0D6' stroke-width='3.2' stroke-linecap='round'/><circle cx='40' cy='1534.4' r='2.2' fill='#CED0D6'/><g stroke='#CED0D6' stroke-width='3.2' stroke-linecap='round' fill='none'><circle cx='30.9' cy='1594.8' r='5.5'/><circle cx='48' cy='1598.9' r='5.5'/><path d='M30.9 1600.6 V1622.4 M30.9 1613.7 H40.4 Q48 1613.7 48 1606.2 V1604.6'/></g></svg>
<svg style='left:2800px;top:81px' width='79' height='400' viewBox='2800 81 79 400' fill='none'><path d='M2845.6 105.55 H2842 A10.4 10.4 0 0 0 2831.6 116 V121.9 L2827.2 130.6 Q2826.3 132.5 2828.4 132.5 H2855.8 Q2857.9 132.5 2857 130.6 L2852.5 121.9 V118.7' stroke='#CED0D6' stroke-width='3.1' stroke-linejoin='round' fill='none'/><path d='M2837.7 135.9 H2846.3 Q2845.4 140.3 2842 140.3 Q2838.6 140.3 2837.7 135.9 Z' fill='#CED0D6'/><circle cx='2855' cy='109' r='7.1' fill='#548AF7'/><path d='M2829.20 189.00 C2830.00 188.75 2832.25 187.82 2834.00 187.50 C2835.75 187.18 2837.87 187.05 2839.70 187.10 C2841.53 187.15 2843.35 187.38 2845.00 187.80 C2846.65 188.22 2848.27 188.90 2849.60 189.60 C2850.93 190.30 2852.10 191.15 2853.00 192.00 C2853.90 192.85 2854.45 193.77 2855.00 194.70 C2855.55 195.63 2856.05 196.63 2856.30 197.60 C2856.55 198.57 2856.55 199.52 2856.50 200.50 C2856.45 201.48 2856.37 202.53 2856.00 203.50 C2855.63 204.47 2855.05 205.47 2854.30 206.30 C2853.55 207.13 2852.58 207.90 2851.50 208.50 C2850.42 209.10 2848.97 209.62 2847.80 209.90 C2846.63 210.18 2845.60 210.25 2844.50 210.20 C2843.40 210.15 2842.18 209.88 2841.20 209.60 C2840.22 209.32 2839.33 208.93 2838.60 208.50 C2837.87 208.07 2837.27 207.52 2836.80 207.00 C2836.33 206.48 2836.00 205.95 2835.80 205.40 C2835.60 204.85 2835.57 204.22 2835.60 203.70 C2835.63 203.18 2835.73 202.72 2836.00 202.30 C2836.27 201.88 2836.73 201.48 2837.20 201.20 C2837.67 200.92 2838.25 200.72 2838.80 200.60 C2839.35 200.48 2839.93 200.38 2840.50 200.50 C2841.07 200.62 2841.92 201.17 2842.20 201.30' stroke='#CED0D6' stroke-width='3.2' stroke-linecap='round' fill='none'/><path d='M2855.00 215.20 C2854.20 215.45 2851.95 216.38 2850.20 216.70 C2848.45 217.02 2846.33 217.15 2844.50 217.10 C2842.67 217.05 2840.85 216.82 2839.20 216.40 C2837.55 215.98 2835.93 215.30 2834.60 214.60 C2833.27 213.90 2832.10 213.05 2831.20 212.20 C2830.30 211.35 2829.75 210.43 2829.20 209.50 C2828.65 208.57 2828.15 207.57 2827.90 206.60 C2827.65 205.63 2827.65 204.68 2827.70 203.70 C2827.75 202.72 2827.83 201.67 2828.20 200.70 C2828.57 199.73 2829.15 198.73 2829.90 197.90 C2830.65 197.07 2831.62 196.30 2832.70 195.70 C2833.78 195.10 2835.23 194.58 2836.40 194.30 C2837.57 194.02 2838.60 193.95 2839.70 194.00 C2840.80 194.05 2842.02 194.32 2843.00 194.60 C2843.98 194.88 2844.87 195.27 2845.60 195.70 C2846.33 196.13 2846.93 196.68 2847.40 197.20 C2847.87 197.72 2848.20 198.25 2848.40 198.80 C2848.60 199.35 2848.63 199.98 2848.60 200.50 C2848.57 201.02 2848.47 201.48 2848.20 201.90 C2847.93 202.32 2847.47 202.72 2847.00 203.00 C2846.53 203.28 2845.95 203.48 2845.40 203.60 C2844.85 203.72 2844.27 203.82 2843.70 203.70 C2843.13 203.58 2842.28 203.03 2842.00 202.90' stroke='#CED0D6' stroke-width='3.2' stroke-linecap='round' fill='none'/><g stroke='#CED0D6' stroke-width='3' fill='none' stroke-linecap='round'><ellipse cx='2842' cy='271' rx='14.6' ry='5.6'/><path d='M2827.4 271 V293.4 C2827.4 296.6 2834 299 2842 299 C2850 299 2856.6 296.6 2856.6 293.4 V271'/><path d='M2827.4 278.6 C2827.4 281.8 2834 284.2 2842 284.2 C2850 284.2 2856.6 281.8 2856.6 278.6 M2827.4 286 C2827.4 289.2 2834 291.6 2842 291.6 C2850 291.6 2856.6 289.2 2856.6 286'/></g></svg>
<div class='abs' style='left:652px;top:1598px;width:2148px;height:2px;background:#32353A'></div>
<div class='t' style='left:673px;top:1609.79px;font-size:26px;color:#A4A7AE;letter-spacing:0.020px;transform:scaleX(1.0750);transform-origin:0 0'>commonModel</div>
<svg style='left:871.5px;top:1612.5px' width='20' height='20' viewBox='0 0 20 20' fill='none'><path d='M7.75 5.5 L12.25 10 L7.75 14.5' stroke='#6F737A' stroke-width='1.8' stroke-linecap='round' stroke-linejoin='round'/></svg>
<div class='t' style='left:904px;top:1609.79px;font-size:26px;color:#A4A7AE;transform:scaleX(1.0665);transform-origin:0 0'>isOpenMethod()</div>
<div class='abs' style='left:0;top:1646px;width:2879px;height:2px;background:#1E1F22'></div>
<div class='abs' style='left:0;top:1704px;width:2879px;height:2px;background:#424348'></div>
<svg style='left:27px;top:1667px' width='18' height='18' viewBox='0 0 18 18' fill='none'><rect x='1.5' y='1.5' width='15' height='15' rx='3.5' fill='#25324D' stroke='#548AF7' stroke-width='2'/></svg>
<div class='t' style='left:53px;top:1661.79px;font-size:26px;color:#A4A7AE;transform:scaleX(1.0054);transform-origin:0 0'>WWW</div>
<svg style='left:142px;top:1665.5px' width='20' height='20' viewBox='0 0 20 20' fill='none'><path d='M6.5 3 L13.5 10 L6.5 17' stroke='#A4A7AE' stroke-width='2' stroke-linecap='round' stroke-linejoin='round'/></svg>
<div class='t' style='left:177px;top:1661.79px;font-size:26px;color:#A4A7AE;transform:scaleX(1.0649);transform-origin:0 0'>module</div>
<svg style='left:281.5px;top:1665.5px' width='20' height='20' viewBox='0 0 20 20' fill='none'><path d='M6.5 3 L13.5 10 L6.5 17' stroke='#A4A7AE' stroke-width='2' stroke-linecap='round' stroke-linejoin='round'/></svg>
<div class='t' style='left:316.5px;top:1661.79px;font-size:26px;color:#A4A7AE;letter-spacing:0.100px;transform:scaleX(1.0750);transform-origin:0 0'>common</div>
<svg style='left:437.5px;top:1665.5px' width='20' height='20' viewBox='0 0 20 20' fill='none'><path d='M6.5 3 L13.5 10 L6.5 17' stroke='#A4A7AE' stroke-width='2' stroke-linecap='round' stroke-linejoin='round'/></svg>
<div class='t' style='left:472.5px;top:1666.69px;font-size:17.5px;color:#548AF7;font-weight:700;font-style:italic;transform:scaleX(0.9890);transform-origin:0 0'>php</div>
<div class='t' style='left:513.5px;top:1661.79px;font-size:26px;color:#A4A7AE;transform:scaleX(1.0650);transform-origin:0 0'>model.php</div>
<svg style='left:655.5px;top:1665.5px' width='20' height='20' viewBox='0 0 20 20' fill='none'><path d='M6.5 3 L13.5 10 L6.5 17' stroke='#A4A7AE' stroke-width='2' stroke-linecap='round' stroke-linejoin='round'/></svg>
<svg style='left:690px;top:1658.3px' width='32' height='32' viewBox='0 0 32 32' fill='none'><circle cx='16' cy='16' r='13' fill='#25324D' stroke='#548AF7' stroke-width='2'/><path d='M20.6 11.9A6 6 0 1 0 20.6 20.1' stroke='#548AF7' stroke-width='2' stroke-linecap='round'/></svg>
<div class='t' style='left:730.5px;top:1661.79px;font-size:26px;color:#A4A7AE;letter-spacing:0.094px;transform:scaleX(1.0750);transform-origin:0 0'>commonModel</div>
<svg style='left:928px;top:1665.5px' width='20' height='20' viewBox='0 0 20 20' fill='none'><path d='M6.5 3 L13.5 10 L6.5 17' stroke='#A4A7AE' stroke-width='2' stroke-linecap='round' stroke-linejoin='round'/></svg>
<svg style='left:962px;top:1658px' width='32' height='32' viewBox='0 0 32 32' fill='none'><circle cx='16' cy='16' r='13' fill='#402929' stroke='#DB5C5C' stroke-width='2'/><path d='M10.2 21.4 V13.6 M10.2 15.6 Q10.6 12.6 13.4 12.6 Q16 12.6 16 15.8 V21.4 M16 15.8 Q16.4 12.6 19.2 12.6 Q21.8 12.6 21.8 15.8 V21.4' stroke='#DB5C5C' stroke-width='2' fill='none' stroke-linecap='round'/></svg>
<svg style='left:999px;top:1664px' width='20' height='20' viewBox='0 0 20 20' fill='none'><rect x='3.4' y='9' width='13.4' height='8.8' rx='1' fill='#57A55F'/><path d='M3.6 9 V5.6 Q3.6 2.4 6.6 2.4 Q9.6 2.4 9.6 5.6 V6.4' stroke='#57A55F' stroke-width='2' fill='none'/></svg>
<div class='t' style='left:1034.5px;top:1661.79px;font-size:26px;color:#A4A7AE;transform:scaleX(1.0633);transform-origin:0 0'>isOpenMethod</div>
<div class='t' style='left:1988.5px;top:1661.79px;font-size:26px;color:#A4A7AE;transform:scaleX(1.0169);transform-origin:0 0'>PHP: 7.0</div>
<div class='t' style='left:2127px;top:1661.79px;font-size:26px;color:#A4A7AE;letter-spacing:0.600px'>206:60 (6 </div>
<svg style='left:2252px;top:1660.00px' width='52' height='35' viewBox='0 -25 52 35'><path d='M10.93 -20.98 10.68 -20.8C11.58 -20.03 12.45 -18.65 12.6 -17.53C14.33 -16.25 15.9 -19.85 10.93 -20.98ZM4.23 -18.32 3.8 -18.3C3.93 -16.68 2.95 -15.23 1.98 -14.7C1.4 -14.38 1.05 -13.85 1.28 -13.28C1.58 -12.62 2.53 -12.62 3.18 -13.08C3.9 -13.58 4.58 -14.65 4.58 -16.28H20.9C20.58 -15.33 20.05 -14.15 19.65 -13.35L20 -13.18C20.98 -13.9 22.3 -15.1 23 -15.98C23.53 -16 23.8 -16.05 23.98 -16.2L22 -18.12L20.88 -17.03H4.5C4.45 -17.43 4.38 -17.88 4.23 -18.32ZM21.6 -8.7 20.35 -7.15H13.3V-9.35C13.88 -9.43 14.12 -9.62 14.18 -10C15.83 -10.7 17.45 -11.65 18.68 -12.48C19.18 -12.5 19.48 -12.55 19.68 -12.73L17.7 -14.53L16.57 -13.4H5.38L5.6 -12.65H16.23C15.48 -11.83 14.43 -10.83 13.38 -10.1L11.65 -10.28V-7.15H1.18L1.4 -6.4H11.65V-0.58C11.65 -0.18 11.5 -0.03 11 -0.03C10.4 -0.03 7.35 -0.25 7.35 -0.25V0.15C8.65 0.3 9.38 0.48 9.83 0.75C10.2 1.05 10.35 1.45 10.48 1.95C13 1.7 13.3 0.88 13.3 -0.45V-6.4H23.18C23.53 -6.4 23.78 -6.53 23.85 -6.8C22.98 -7.6 21.6 -8.7 21.6 -8.7ZM35.73 -7.8 35.42 -7.6C36.52 -6.45 37.77 -4.55 37.98 -3.05C39.67 -1.7 41.17 -5.53 35.73 -7.8ZM31.73 -14.08C30.25 -10.43 27.95 -7.03 25.85 -5L26.18 -4.7C27.43 -5.58 28.7 -6.7 29.85 -8.03V1.95H30.15C30.75 1.95 31.4 1.55 31.45 1.43V-8.83C31.85 -8.9 32.12 -9.05 32.2 -9.25L31.18 -9.65C31.85 -10.6 32.48 -11.6 33.05 -12.65C33.6 -12.58 33.9 -12.75 34.02 -13.03ZM42.9 -13.6V-10.05H33.4L33.6 -9.33H42.9V-0.62C42.9 -0.23 42.75 -0.08 42.25 -0.08C41.67 -0.08 38.73 -0.28 38.73 -0.28V0.1C39.98 0.28 40.67 0.48 41.1 0.75C41.5 1.03 41.65 1.43 41.73 1.98C44.2 1.73 44.5 0.85 44.5 -0.5V-9.33H48.45C48.8 -9.33 49.05 -9.43 49.1 -9.7C48.38 -10.45 47.12 -11.45 47.12 -11.45L46.03 -10.05H44.5V-12.65C45.1 -12.75 45.33 -12.95 45.4 -13.33ZM29.85 -20.98C28.98 -17.93 27.4 -15.08 25.82 -13.3L26.15 -13.03C27.52 -14 28.8 -15.4 29.88 -17.07H31.12C31.75 -16.23 32.38 -15 32.45 -14.03C33.75 -12.9 35.12 -15.4 32.1 -17.07H36.98C37.3 -17.07 37.55 -17.2 37.6 -17.48C36.9 -18.15 35.75 -19.1 35.75 -19.1L34.73 -17.8H30.32C30.68 -18.4 31 -19.03 31.3 -19.68C31.82 -19.62 32.12 -19.83 32.25 -20.1ZM39.52 -20.98C38.6 -18.23 37.15 -15.55 35.75 -13.93L36.1 -13.62C37.25 -14.5 38.35 -15.7 39.35 -17.07H41.15C41.95 -16.23 42.7 -15 42.8 -13.98C44.2 -12.9 45.5 -15.5 42.38 -17.07H48.25C48.6 -17.07 48.85 -17.2 48.92 -17.48C48.12 -18.2 46.83 -19.2 46.83 -19.2L45.67 -17.8H39.85C40.25 -18.4 40.6 -19.03 40.95 -19.65C41.42 -19.58 41.78 -19.8 41.88 -20.08Z' fill='#A4A7AE'/></svg>
<div class='t' style='left:2303.5px;top:1661.79px;font-size:26px;color:#A4A7AE'>)</div>
<div class='t' style='left:2346px;top:1661.79px;font-size:26px;color:#A4A7AE;transform:scaleX(1.0157);transform-origin:0 0'>LF</div>
<div class='t' style='left:2408.5px;top:1661.79px;font-size:26px;color:#A4A7AE;transform:scaleX(1.0699);transform-origin:0 0'>UTF-8</div>
<svg style='left:2500px;top:1650px' width='360' height='56' viewBox='2500 1650 360 56' fill='none'><g stroke='#C4C7CE' stroke-width='2.1' fill='none' stroke-linecap='round'><path d='M2524.8 1676.4 C2529.5 1661.4 2543.7 1661.4 2548.4 1676.4 C2543.7 1691.4 2529.5 1691.4 2524.8 1676.4 Z'/><circle cx='2536.6' cy='1676.4' r='4.6'/></g><path d='M2524 1689 L2549 1663.4' stroke='#2B2D30' stroke-width='6'/><path d='M2524 1689 L2549 1663.4' stroke='#C4C7CE' stroke-width='2.1' stroke-linecap='round'/></svg>
<svg style='left:2585px;top:1658px' width='32' height='32' viewBox='0 0 32 32' fill='none'><g stroke='#C4C7CE' stroke-width='2.2' stroke-linecap='round' fill='none'><path d='M17.6 6.6 C16.8 6.3 16 6.2 15.2 6.2 C11.6 6.2 9.4 8.4 9.4 10.8'/><path d='M8.4 12.4 H15.4'/><path d='M8 12.8 V22.6 A7.3 7.3 0 0 0 22.6 22.6 V17.6'/><path d='M2.6 12.4 L7.4 15.2 M1 20.4 H7.4 M2.6 28.2 L7.4 25.6 M23.2 20.4 H29.2 M23.2 25.6 L27.6 28.2'/></g><circle cx='18.9' cy='15' r='2.4' fill='#57A55F'/><path d='M21.2 8.8 A6.6 6.6 0 0 1 25.4 13.8' stroke='#57A55F' stroke-width='2.2' stroke-linecap='round' fill='none'/><path d='M20.9 4.3 A10.9 10.9 0 0 1 29.6 13.2' stroke='#57A55F' stroke-width='2.2' stroke-linecap='round' fill='none'/></svg>
<div class='t' style='left:2649px;top:1661.79px;font-size:26px;color:#A4A7AE'>4</div>
<svg style='left:2673px;top:1660.00px' width='77' height='35' viewBox='0 -25 77 35'><path d='M12.7 -19.43C14.68 -15.35 18.23 -11.73 22.6 -9.2C22.83 -9.85 23.3 -10.45 24.05 -10.65L24.1 -11C19.48 -13 15.55 -16.23 13.15 -19.73C13.8 -19.78 14.08 -19.93 14.15 -20.23L11.3 -20.93C9.68 -16.98 5.3 -12.03 0.85 -9.08L1.05 -8.7C6.08 -11.25 10.48 -15.68 12.7 -19.43ZM14.18 -13.73 11.55 -14V2H11.88C12.53 2 13.25 1.65 13.25 1.43V-13.05C13.9 -13.12 14.1 -13.38 14.18 -13.73ZM35.33 -13.85C36.02 -13.8 36.33 -13.95 36.45 -14.2L34.25 -15.48C32.92 -13.78 29.43 -10.58 26.93 -8.97L27.18 -8.68C30.1 -9.95 33.45 -12.2 35.33 -13.85ZM39.62 -15.05 39.38 -14.75C41.75 -13.5 45.08 -11.1 46.35 -9.25C48.62 -8.43 48.8 -12.9 39.62 -15.05ZM35.95 -21.25 35.7 -21.08C36.5 -20.28 37.33 -18.82 37.42 -17.7C39.15 -16.35 40.8 -20 35.95 -21.25ZM28.85 -18.65 28.43 -18.62C28.62 -16.85 27.77 -15.2 26.75 -14.6C26.25 -14.3 25.9 -13.78 26.12 -13.23C26.43 -12.65 27.32 -12.68 27.95 -13.15C28.68 -13.65 29.35 -14.8 29.27 -16.53H46.08C45.83 -15.48 45.42 -14.08 45.1 -13.18L45.42 -13.03C46.33 -13.85 47.48 -15.25 48.08 -16.23C48.58 -16.25 48.85 -16.3 49.03 -16.48L47.08 -18.38L45.95 -17.28H29.2C29.12 -17.7 29.02 -18.15 28.85 -18.65ZM46.4 -1.62 45.15 -0.05H38.33V-7.48H45.98C46.3 -7.48 46.55 -7.6 46.6 -7.88C45.78 -8.62 44.45 -9.62 44.45 -9.62L43.3 -8.2H28.68L28.9 -7.48H36.67V-0.05H26.27L26.48 0.7H47.98C48.33 0.7 48.6 0.58 48.67 0.3C47.8 -0.53 46.4 -1.62 46.4 -1.62ZM58.52 -16.55 57.4 -15.15H56.38V-20.08C57 -20.18 57.2 -20.43 57.25 -20.8L54.8 -21.05V-15.15H50.95L51.15 -14.4H54.4C53.77 -10.62 52.6 -6.88 50.75 -3.95L51.12 -3.62C52.7 -5.45 53.9 -7.53 54.8 -9.83V2H55.12C55.7 2 56.38 1.6 56.38 1.38V-11.68C57.2 -10.7 58.1 -9.4 58.35 -8.35C59.9 -7.2 61.2 -10.28 56.38 -12.28V-14.4H59.83C60.17 -14.4 60.42 -14.53 60.48 -14.8C59.73 -15.55 58.52 -16.55 58.52 -16.55ZM65.95 -20.1 63.48 -20.95C62.6 -17.4 60.95 -14.08 59.23 -11.98L59.58 -11.73C60.83 -12.73 61.95 -14.03 62.95 -15.58C63.73 -14.15 64.65 -12.83 65.8 -11.65C63.73 -9.62 61.1 -7.95 58.02 -6.75L58.25 -6.35C59.42 -6.7 60.5 -7.1 61.52 -7.55V1.93H61.77C62.58 1.93 63.08 1.58 63.08 1.43V0.23H69.78V1.73H70.03C70.78 1.73 71.38 1.38 71.38 1.25V-6.35C71.88 -6.45 72.12 -6.58 72.3 -6.78L70.5 -8.2L69.67 -7.2H63.38L62.02 -7.78C63.8 -8.62 65.38 -9.62 66.7 -10.78C68.33 -9.33 70.35 -8.12 72.85 -7.18C73 -7.93 73.5 -8.35 74.17 -8.53L74.22 -8.78C71.62 -9.45 69.47 -10.45 67.67 -11.65C69.3 -13.23 70.55 -15 71.5 -16.95C72.1 -16.98 72.4 -17.05 72.58 -17.25L70.83 -18.9L69.72 -17.9H64.25C64.53 -18.48 64.78 -19.05 65 -19.65C65.55 -19.62 65.85 -19.85 65.95 -20.1ZM63.27 -16.12 63.88 -17.15H69.67C68.92 -15.48 67.9 -13.9 66.6 -12.48C65.25 -13.55 64.17 -14.78 63.27 -16.12ZM63.08 -0.53V-6.48H69.78V-0.53Z' fill='#A4A7AE'/></svg>
<svg style='left:2750px;top:1650px' width='110' height='56' viewBox='2750 1650 110 56' fill='none'><g stroke='#C4C7CE' stroke-width='2.1' fill='none' stroke-linejoin='round' stroke-linecap='round'><path d='M2764.4 1688.2 H2760.2 Q2757.3 1688.2 2757.3 1685.3 V1670.4 L2764.2 1663.4 H2772.2 Q2775.2 1663.4 2775.2 1666.4 V1673.6'/><path d='M2757.6 1670.6 H2761.6 Q2764.2 1670.6 2764.2 1668 V1663.8'/><path d='M2776.13 1679.43 L2775.67 1677.18 L2772.53 1677.18 L2772.07 1679.43 L2771.16 1679.95 L2768.98 1679.23 L2767.41 1681.95 L2769.13 1683.48 L2769.13 1684.52 L2767.41 1686.05 L2768.98 1688.77 L2771.16 1688.05 L2772.07 1688.57 L2772.53 1690.82 L2775.67 1690.82 L2776.13 1688.57 L2777.04 1688.05 L2779.22 1688.77 L2780.79 1686.05 L2779.07 1684.52 L2779.07 1683.48 L2780.79 1681.95 L2779.22 1679.23 L2777.04 1679.95Z'/></g><circle cx='2774.1' cy='1684' r='1.8' fill='#C4C7CE'/><g stroke='#C4C7CE' stroke-width='2.2' fill='none' stroke-linecap='round'><rect x='2821.1' y='1673.1' width='17.8' height='13.8' rx='3.2'/><path d='M2830 1677.6 V1682.8'/><path d='M2835.3 1672.4 V1669.4 A4.55 4.55 0 0 1 2844.4 1669.4 V1673.4'/></g></svg>
</body></html>
